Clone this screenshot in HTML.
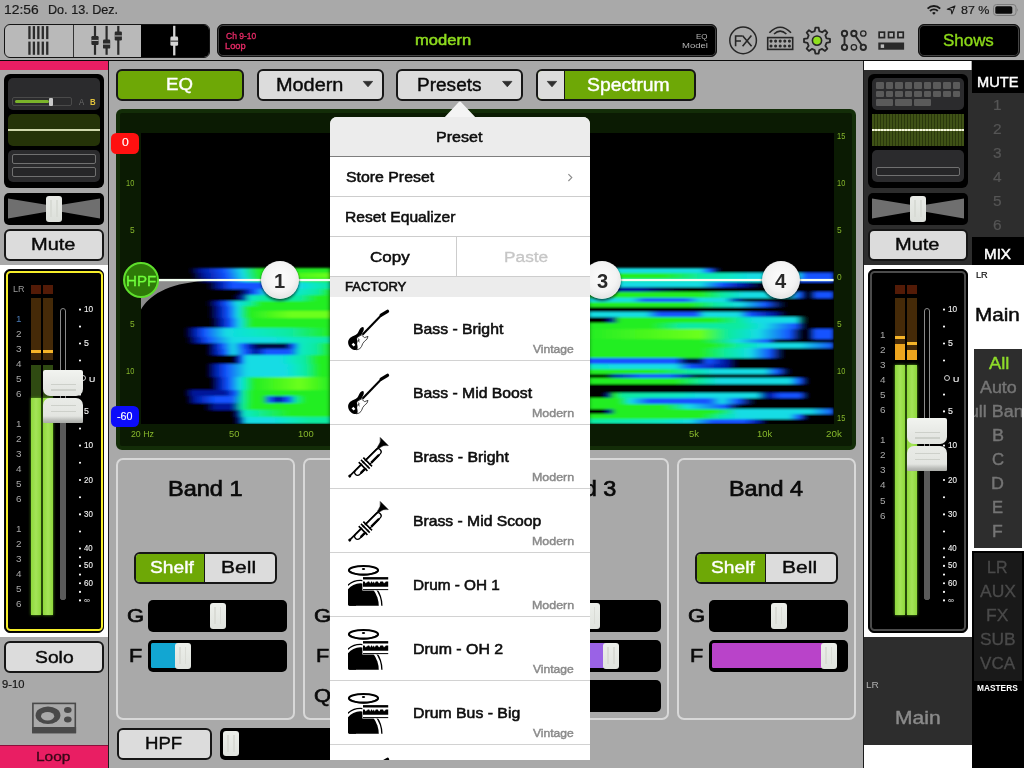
<!DOCTYPE html>
<html><head><meta charset="utf-8"><title>EQ</title>
<style>
html,body{margin:0;padding:0;}
body{width:1024px;height:768px;overflow:hidden;position:relative;background:#a9a9a9;font-family:"Liberation Sans",sans-serif;}
div,span.t,svg{position:absolute;box-sizing:border-box;}
span.t{white-space:nowrap;transform-origin:0 0;display:block;}
</style></head><body>
<span class="t" style="left:3.94px;top:4.29px;font-size:12.06px;line-height:12.06px;color:#1a1a1a;-webkit-text-stroke:0.2px #1a1a1a;transform:scaleX(1.1482);">12:56</span>
<span class="t" style="left:48.46px;top:4.29px;font-size:12.06px;line-height:12.06px;color:#1a1a1a;-webkit-text-stroke:0.2px #1a1a1a;transform:scaleX(1.0468);">Do. 13. Dez.</span>
<span class="t" style="left:960.96px;top:4.35px;font-size:11.63px;line-height:11.63px;color:#1a1a1a;-webkit-text-stroke:0.2px #1a1a1a;transform:scaleX(1.0749);">87 %</span>
<svg style="left:925px;top:3px" width="96" height="14" viewBox="925 3 96 14">
<g fill="none" stroke="#1a1a1a" stroke-width="1.9" stroke-linecap="butt">
<path d="M927.6 8.6 A9 9 0 0 1 940.2 8.6"/>
<path d="M930 11 A5.6 5.6 0 0 1 937.8 11"/>
</g>
<path d="M932.1 12.9 L933.9 14.7 L935.7 12.9 A2.6 2.6 0 0 0 932.1 12.9Z" fill="#1a1a1a"/>
<path d="M955 5.9 L947.3 9.3 L951.2 9.9 L951.9 13.9 Z" fill="none" stroke="#1a1a1a" stroke-width="1.1" stroke-linejoin="round"/>
<rect x="993.5" y="4.5" width="22.5" height="11" rx="3" fill="none" stroke="#7d7d7d" stroke-width="1"/>
<rect x="995.3" y="6.2" width="17" height="7.6" rx="1.6" fill="#0a0a0a"/>
<path d="M1017 8.3 q1.6 1.7 0 3.4z" fill="#7d7d7d"/>
</svg>
<div style="left:4px;top:24px;width:205.5px;height:33.5px;background:#b9b9b9;border:1.3px solid #141414;border-radius:6px;overflow:hidden;"><div style="left:67.7px;top:0;width:1px;height:33px;background:#333"></div><div style="left:136px;top:-1px;width:70px;height:35px;background:#000"></div></div>
<svg style="left:0;top:0" width="1024" height="60" viewBox="0 0 1024 60"><rect x="28.30" y="26.1" width="2.3" height="13" fill="#2b2b2b"/><rect x="28.30" y="41.6" width="2.3" height="13.2" fill="#2b2b2b"/><rect x="32.75" y="26.1" width="2.3" height="13" fill="#2b2b2b"/><rect x="32.75" y="41.6" width="2.3" height="13.2" fill="#2b2b2b"/><rect x="37.20" y="26.1" width="2.3" height="13" fill="#2b2b2b"/><rect x="37.20" y="41.6" width="2.3" height="13.2" fill="#2b2b2b"/><rect x="41.65" y="26.1" width="2.3" height="13" fill="#2b2b2b"/><rect x="41.65" y="41.6" width="2.3" height="13.2" fill="#2b2b2b"/><rect x="46.10" y="26.1" width="2.3" height="13" fill="#2b2b2b"/><rect x="46.10" y="41.6" width="2.3" height="13.2" fill="#2b2b2b"/><rect x="93.90" y="25.9" width="2.2" height="28.9" fill="#2b2b2b"/><rect x="91.40" y="36.00" width="7.2" height="9" rx="1.2" fill="#2b2b2b"/><rect x="91.40" y="39.90" width="7.2" height="1.1" fill="#b0b0b0"/><rect x="105.50" y="25.9" width="2.2" height="28.9" fill="#2b2b2b"/><rect x="103.00" y="39.60" width="7.2" height="9" rx="1.2" fill="#2b2b2b"/><rect x="103.00" y="43.50" width="7.2" height="1.1" fill="#b0b0b0"/><rect x="117.20" y="25.9" width="2.2" height="28.9" fill="#2b2b2b"/><rect x="114.70" y="31.50" width="7.2" height="9" rx="1.2" fill="#2b2b2b"/><rect x="114.70" y="35.40" width="7.2" height="1.1" fill="#b0b0b0"/><rect x="173.1" y="25.8" width="2.3" height="29.6" fill="#d4d4d4"/><rect x="170.4" y="36.6" width="7.7" height="9.2" rx="1.3" fill="#d4d4d4"/><rect x="170.4" y="40.6" width="7.7" height="1.1" fill="#333"/><circle cx="743.1" cy="40.4" r="13.3" fill="none" stroke="#262626" stroke-width="1.5"/><g fill="none" stroke="#262626" stroke-width="1.6"><path d="M735.6 46.2 V36 H742 M735.6 41 H741"/><path d="M742.4 35.4 L751.6 46.2 M751.4 35.4 L742.6 46.2"/></g><rect x="767.7" y="37.6" width="25" height="11.8" fill="none" stroke="#262626" stroke-width="1.6"/><circle cx="771.00" cy="41.10" r="1.55" fill="#2a2a2a"/><circle cx="771.00" cy="46.00" r="1.55" fill="#2a2a2a"/><circle cx="775.60" cy="41.10" r="1.55" fill="#2a2a2a"/><circle cx="775.60" cy="46.00" r="1.55" fill="#2a2a2a"/><circle cx="780.20" cy="41.10" r="1.55" fill="#2a2a2a"/><circle cx="780.20" cy="46.00" r="1.55" fill="#2a2a2a"/><circle cx="784.80" cy="41.10" r="1.55" fill="#2a2a2a"/><circle cx="784.80" cy="46.00" r="1.55" fill="#2a2a2a"/><circle cx="789.40" cy="41.10" r="1.55" fill="#2a2a2a"/><circle cx="789.40" cy="46.00" r="1.55" fill="#2a2a2a"/><g fill="none" stroke="#262626" stroke-width="1.6"><path d="M769.4 32.8 Q780.2 21.7 791 32.8"/><path d="M774 34 Q780.2 28.2 786.4 34"/></g><path d="M814.72 31.07 L815.37 27.60 L818.63 27.60 L819.28 31.07 L822.13 32.25 L825.04 30.25 L827.35 32.56 L825.35 35.47 L826.53 38.32 L830.00 38.97 L830.00 42.23 L826.53 42.88 L825.35 45.73 L827.35 48.64 L825.04 50.95 L822.13 48.95 L819.28 50.13 L818.63 53.60 L815.37 53.60 L814.72 50.13 L811.87 48.95 L808.96 50.95 L806.65 48.64 L808.65 45.73 L807.47 42.88 L804.00 42.23 L804.00 38.97 L807.47 38.32 L808.65 35.47 L806.65 32.56 L808.96 30.25 L811.87 32.25Z" fill="none" stroke="#262626" stroke-width="1.8" stroke-linejoin="round"/><circle cx="817" cy="40.6" r="4.6" fill="#8fe01c" stroke="#262626" stroke-width="1.6"/><g fill="none" stroke="#262626"><g stroke-width="1.9"><path d="M844.5 36.6 V44.3 M855.6 36 L861.5 44.8"/><circle cx="844.5" cy="33.5" r="2.7"/><circle cx="853.9" cy="33.5" r="2.7"/><circle cx="844.5" cy="47.3" r="2.7"/><circle cx="863.3" cy="47.3" r="2.7"/></g><g stroke-width="1.3"><circle cx="863.3" cy="33.5" r="2.7"/><circle cx="853.9" cy="47.3" r="2.7"/></g></g><rect x="879.15" y="32.2" width="5.3" height="5.4" fill="#b4b4b4" stroke="#262626" stroke-width="1.7"/><rect x="888.55" y="32.2" width="5.3" height="5.4" fill="#b4b4b4" stroke="#262626" stroke-width="1.7"/><rect x="897.95" y="32.2" width="5.3" height="5.4" fill="#b4b4b4" stroke="#262626" stroke-width="1.7"/><rect x="878.3" y="42.5" width="25.8" height="7.2" fill="#2a2a2a"/><rect x="880.7" y="44.4" width="3.4" height="3.5" fill="#bbb"/></svg>
<div style="left:217px;top:24px;width:499.5px;height:33px;background:#000;border:1px solid #111;box-shadow:inset 0 0 0 1px #444;border-radius:6px;"></div>
<span class="t" style="left:225.57px;top:33.31px;font-size:8.14px;line-height:8.14px;color:#e62a66;-webkit-text-stroke:0.3px #e62a66;transform:scaleX(1.0451);">Ch 9-10</span>
<span class="t" style="left:225.24px;top:42.91px;font-size:8.14px;line-height:8.14px;color:#e62a66;-webkit-text-stroke:0.3px #e62a66;transform:scaleX(1.1404);">Loop</span>
<span class="t" style="left:414.90px;top:33.29px;font-size:14.54px;line-height:14.54px;color:#8edb1f;-webkit-text-stroke:0.5px #8edb1f;transform:scaleX(1.1398);">modern</span>
<span class="t" style="left:696.34px;top:32.95px;font-size:7.85px;line-height:7.85px;color:#b4b4b4;transform:scaleX(1.0173);">EQ</span>
<span class="t" style="left:682.22px;top:42.35px;font-size:7.85px;line-height:7.85px;color:#b4b4b4;transform:scaleX(1.2123);">Model</span>
<div style="left:918px;top:24px;width:102px;height:33px;background:#000;border:1px solid #111;box-shadow:inset 0 0 0 1px #444;border-radius:6px;"></div>
<span class="t" style="left:942.98px;top:32.79px;font-size:15.84px;line-height:15.84px;color:#8cd919;-webkit-text-stroke:0.35px #8cd919;transform:scaleX(1.0700);">Shows</span>
<div style="left:0px;top:60px;width:1024px;height:1px;background:#0a0a0a;"></div>
<div style="left:0px;top:61px;width:107.6px;height:9.4px;background:#e91e63;"></div>
<div style="left:108px;top:61px;width:1px;height:707px;background:#1c1c1c;"></div>
<div style="left:4px;top:74px;width:100px;height:114px;background:#000;border-radius:6px;"></div>
<div style="left:8px;top:78px;width:92px;height:32px;background:#2b2b2d;border-radius:5px;"></div>
<div style="left:8px;top:114px;width:92px;height:32px;background:#253308;border-radius:5px;overflow:hidden;"><div style="left:0;top:15.3px;width:92px;height:1.7px;background:#cfd7ab"></div></div>
<div style="left:8px;top:150px;width:92px;height:32px;background:#2b2b2d;border-radius:5px;"></div>
<div style="left:12px;top:154px;width:84px;height:10px;border:1.6px solid #707070;border-radius:2px;background:#262628;"></div>
<div style="left:12px;top:167px;width:84px;height:10px;border:1.6px solid #707070;border-radius:2px;background:#262628;"></div>
<div style="left:12.3px;top:97.2px;width:59.4px;height:8.7px;border:1px solid #4a4a4a;border-radius:2px;"></div>
<div style="left:15px;top:99.6px;width:33.6px;height:3.6px;background:#7ab32a;border-radius:1.8px;"></div>
<div style="left:48.8px;top:97.6px;width:3.8px;height:8px;background:#c9c9c9;border-radius:1px;"></div>
<span class="t" style="left:79.38px;top:98.61px;font-size:8.14px;line-height:8.14px;color:#6a6a6a;transform:scaleX(0.9634);">A</span>
<span class="t" style="left:89.67px;top:98.61px;font-size:8.14px;line-height:8.14px;color:#e2c23c;font-weight:bold;transform:scaleX(0.9669);">B</span>
<div style="left:4px;top:193px;width:100px;height:32px;background:#000;border-radius:5px;"></div>
<svg style="left:4px;top:193px" width="100" height="32" viewBox="0 0 100 32"><path d="M4 5.6 L50 13 L96 5.6 L96 25.6 L50 17.6 L4 25.6Z" fill="#6f6f6f"/></svg>
<div style="left:46px;top:196px;width:16px;height:25.6px;background:linear-gradient(#e9ebe7,#dcdfda);border-radius:3px;"><div style="left:4.4px;top:4px;width:1.6px;height:17px;background:#d8dbd5"></div><div style="left:10px;top:4px;width:1.6px;height:17px;background:#d8dbd5"></div></div>
<div style="left:4px;top:229px;width:100px;height:32px;background:#dcdcdc;border:2px solid #161616;border-radius:6px;"></div>
<span class="t" style="left:31.36px;top:236.39px;font-size:16.42px;line-height:16.42px;color:#0a0a0a;-webkit-text-stroke:0.4px #0a0a0a;transform:scaleX(1.2196);">Mute</span>
<div style="left:0px;top:265px;width:108px;height:372px;background:#fff;"></div>
<div style="left:4px;top:269px;width:100px;height:363.5px;background:#000;border:1.5px solid #0a0a0a;border-radius:6px;"></div>
<div style="left:5.5px;top:270.5px;width:97px;height:360.5px;background:#000;border:2px solid #f6ee2a;border-radius:4.5px;"></div>
<div style="left:31px;top:285px;width:10px;height:9.2px;background:#531b07;"></div>
<div style="left:31px;top:298.4px;width:10px;height:61.8px;background:#452a08;"></div>
<div style="left:31px;top:349.5px;width:10px;height:3.3px;background:#f5b429;"></div>
<div style="left:31px;top:365px;width:10px;height:33px;background:#2f4a12;"></div>
<div style="left:31px;top:398px;width:10px;height:217px;background:linear-gradient(90deg,#8fd83c,#a4e458 50%,#8fd83c);box-shadow:0 0 3px #58a818;"></div>
<div style="left:43px;top:285px;width:10px;height:9.2px;background:#531b07;"></div>
<div style="left:43px;top:298.4px;width:10px;height:61.8px;background:#452a08;"></div>
<div style="left:43px;top:349.5px;width:10px;height:3.3px;background:#f5b429;"></div>
<div style="left:43px;top:365px;width:10px;height:33px;background:#2f4a12;"></div>
<div style="left:43px;top:398px;width:10px;height:217px;background:linear-gradient(90deg,#8fd83c,#a4e458 50%,#8fd83c);box-shadow:0 0 3px #58a818;"></div>
<div style="left:60px;top:308.4px;width:6px;height:291.6px;background:#000;border:1px solid #8a8a8a;border-radius:3px;"></div>
<div style="left:60px;top:410px;width:6px;height:190px;background:#5a5a5a;border-radius:0 0 3px 3px;"></div>
<svg style="left:77.30px;top:300px" width="6" height="310" viewBox="0 300 6 310"><circle cx="3" cy="309.60" r="1.05" fill="#fff"/><circle cx="3" cy="326.60" r="1.05" fill="#fff"/><circle cx="3" cy="343.50" r="1.05" fill="#fff"/><circle cx="3" cy="360.50" r="1.05" fill="#fff"/><circle cx="3" cy="394.60" r="1.05" fill="#fff"/><circle cx="3" cy="411.40" r="1.05" fill="#fff"/><circle cx="3" cy="428.60" r="1.05" fill="#fff"/><circle cx="3" cy="445.60" r="1.05" fill="#fff"/><circle cx="3" cy="462.80" r="1.05" fill="#fff"/><circle cx="3" cy="480.00" r="1.05" fill="#fff"/><circle cx="3" cy="497.20" r="1.05" fill="#fff"/><circle cx="3" cy="514.40" r="1.05" fill="#fff"/><circle cx="3" cy="531.50" r="1.05" fill="#fff"/><circle cx="3" cy="548.50" r="1.05" fill="#fff"/><circle cx="3" cy="557.20" r="1.05" fill="#fff"/><circle cx="3" cy="565.90" r="1.05" fill="#fff"/><circle cx="3" cy="574.60" r="1.05" fill="#fff"/><circle cx="3" cy="583.20" r="1.05" fill="#fff"/><circle cx="3" cy="591.90" r="1.05" fill="#fff"/><circle cx="3" cy="600.40" r="1.05" fill="#fff"/></svg>
<span class="t" style="left:83.57px;top:305.14px;font-size:8.58px;line-height:8.58px;color:#f2f2f2;-webkit-text-stroke:0.1px #f2f2f2;transform:scaleX(0.9590);">10</span>
<span class="t" style="left:83.85px;top:339.04px;font-size:8.58px;line-height:8.58px;color:#f2f2f2;-webkit-text-stroke:0.1px #f2f2f2;transform:scaleX(1.0329);">5</span>
<span class="t" style="left:83.85px;top:406.94px;font-size:8.58px;line-height:8.58px;color:#f2f2f2;-webkit-text-stroke:0.1px #f2f2f2;transform:scaleX(1.0329);">5</span>
<span class="t" style="left:83.57px;top:441.14px;font-size:8.58px;line-height:8.58px;color:#f2f2f2;-webkit-text-stroke:0.1px #f2f2f2;transform:scaleX(0.9590);">10</span>
<span class="t" style="left:83.80px;top:475.54px;font-size:8.58px;line-height:8.58px;color:#f2f2f2;-webkit-text-stroke:0.1px #f2f2f2;transform:scaleX(0.9347);">20</span>
<span class="t" style="left:83.90px;top:509.94px;font-size:8.58px;line-height:8.58px;color:#f2f2f2;-webkit-text-stroke:0.1px #f2f2f2;transform:scaleX(0.9237);">30</span>
<span class="t" style="left:84.02px;top:544.04px;font-size:8.58px;line-height:8.58px;color:#f2f2f2;-webkit-text-stroke:0.1px #f2f2f2;transform:scaleX(0.9104);">40</span>
<span class="t" style="left:83.88px;top:561.44px;font-size:8.58px;line-height:8.58px;color:#f2f2f2;-webkit-text-stroke:0.1px #f2f2f2;transform:scaleX(0.9254);">50</span>
<span class="t" style="left:83.79px;top:578.74px;font-size:8.58px;line-height:8.58px;color:#f2f2f2;-webkit-text-stroke:0.1px #f2f2f2;transform:scaleX(0.9351);">60</span>
<span class="t" style="left:83.65px;top:596.71px;font-size:8.14px;line-height:8.14px;color:#e8e8e8;transform:scaleX(1.0174);">∞</span>
<div style="left:80.30px;top:374.6px;width:6px;height:6.4px;border:1px solid #cfcfcf;border-radius:4px"></div>
<span class="t" style="left:88.72px;top:376.38px;font-size:7.70px;line-height:7.70px;color:#e8e8e8;-webkit-text-stroke:0.2px #e8e8e8;transform:scaleX(1.1429);">U</span>
<span class="t" style="left:15.92px;top:313.63px;font-size:9.88px;line-height:9.88px;color:#4a7ab5;transform:scaleX(1.0030);">1</span>
<span class="t" style="left:16.05px;top:328.73px;font-size:9.88px;line-height:9.88px;color:#a8a8a8;transform:scaleX(1.0030);">2</span>
<span class="t" style="left:16.08px;top:343.83px;font-size:9.88px;line-height:9.88px;color:#a8a8a8;transform:scaleX(1.0030);">3</span>
<span class="t" style="left:16.08px;top:358.93px;font-size:9.88px;line-height:9.88px;color:#a8a8a8;transform:scaleX(1.0030);">4</span>
<span class="t" style="left:16.06px;top:374.03px;font-size:9.88px;line-height:9.88px;color:#a8a8a8;transform:scaleX(1.0030);">5</span>
<span class="t" style="left:16.02px;top:389.13px;font-size:9.88px;line-height:9.88px;color:#a8a8a8;transform:scaleX(1.0030);">6</span>
<span class="t" style="left:15.92px;top:418.63px;font-size:9.88px;line-height:9.88px;color:#a8a8a8;transform:scaleX(1.0030);">1</span>
<span class="t" style="left:16.05px;top:433.73px;font-size:9.88px;line-height:9.88px;color:#a8a8a8;transform:scaleX(1.0030);">2</span>
<span class="t" style="left:16.08px;top:448.83px;font-size:9.88px;line-height:9.88px;color:#a8a8a8;transform:scaleX(1.0030);">3</span>
<span class="t" style="left:16.08px;top:463.93px;font-size:9.88px;line-height:9.88px;color:#a8a8a8;transform:scaleX(1.0030);">4</span>
<span class="t" style="left:16.06px;top:479.03px;font-size:9.88px;line-height:9.88px;color:#a8a8a8;transform:scaleX(1.0030);">5</span>
<span class="t" style="left:16.02px;top:494.13px;font-size:9.88px;line-height:9.88px;color:#a8a8a8;transform:scaleX(1.0030);">6</span>
<span class="t" style="left:15.92px;top:523.63px;font-size:9.88px;line-height:9.88px;color:#a8a8a8;transform:scaleX(1.0030);">1</span>
<span class="t" style="left:16.05px;top:538.73px;font-size:9.88px;line-height:9.88px;color:#a8a8a8;transform:scaleX(1.0030);">2</span>
<span class="t" style="left:16.08px;top:553.83px;font-size:9.88px;line-height:9.88px;color:#a8a8a8;transform:scaleX(1.0030);">3</span>
<span class="t" style="left:16.08px;top:568.93px;font-size:9.88px;line-height:9.88px;color:#a8a8a8;transform:scaleX(1.0030);">4</span>
<span class="t" style="left:16.06px;top:584.03px;font-size:9.88px;line-height:9.88px;color:#a8a8a8;transform:scaleX(1.0030);">5</span>
<span class="t" style="left:16.02px;top:599.13px;font-size:9.88px;line-height:9.88px;color:#a8a8a8;transform:scaleX(1.0030);">6</span>
<span class="t" style="left:13.06px;top:285.17px;font-size:9.01px;line-height:9.01px;color:#9a9a9a;transform:scaleX(1.0036);">LR</span>
<div style="left:43px;top:370px;width:40px;height:25.6px;background:linear-gradient(#f2f4f0,#e6e8e4 60%,#e2e4e0);border-radius:2px 2px 7px 7px;"></div>
<div style="left:43px;top:397.6px;width:40px;height:25.6px;background:linear-gradient(#e9ebe7,#e3e5e1 72%,#b9bbb7 90%,#a9aba7);border-radius:7px 7px 1px 1px;"></div>
<div style="left:50.6px;top:383.6px;width:25px;height:1.4px;background:#cdd0ca;"></div>
<div style="left:50.6px;top:389.3px;width:25px;height:1.4px;background:#cdd0ca;"></div>
<div style="left:50.6px;top:405.1px;width:25px;height:1.4px;background:#cdd0ca;"></div>
<div style="left:50.6px;top:410.7px;width:25px;height:1.4px;background:#cdd0ca;"></div>
<div style="left:4px;top:641px;width:100px;height:32px;background:#dcdcdc;border:2px solid #161616;border-radius:6px;"></div>
<span class="t" style="left:34.62px;top:648.59px;font-size:16.42px;line-height:16.42px;color:#0a0a0a;-webkit-text-stroke:0.4px #0a0a0a;transform:scaleX(1.1769);">Solo</span>
<span class="t" style="left:2.08px;top:679.49px;font-size:10.76px;line-height:10.76px;color:#161616;-webkit-text-stroke:0.2px #161616;transform:scaleX(1.0386);">9-10</span>
<svg style="left:30px;top:700px" width="50" height="36" viewBox="30 700 50 36">
<rect x="32.9" y="703.4" width="42.4" height="29" fill="none" stroke="#494949" stroke-width="1.6"/>
<rect x="32.1" y="727" width="44" height="6.3" fill="#494949"/>
<ellipse cx="48" cy="715.2" rx="12.4" ry="8.8" fill="#494949"/>
<ellipse cx="47.6" cy="716.3" rx="6.6" ry="4.2" fill="#a9a9a9"/>
<ellipse cx="67.8" cy="709.9" rx="3.8" ry="3" fill="#494949"/>
<ellipse cx="67.8" cy="719.6" rx="3.8" ry="3" fill="#494949"/>
</svg>
<div style="left:0px;top:745px;width:107.6px;height:23px;background:#e91e63;border-top:1px solid #8c0f3a;"></div>
<span class="t" style="left:36.28px;top:750.18px;font-size:13.37px;line-height:13.37px;color:#3b0718;-webkit-text-stroke:0.35px #3b0718;transform:scaleX(1.1570);">Loop</span>
<div style="left:116px;top:69px;width:127.5px;height:32px;background:#6ea806;border:2px solid #161616;border-radius:6px;"></div>
<span class="t" style="left:166.02px;top:76.46px;font-size:17.30px;line-height:17.30px;color:#fff;-webkit-text-stroke:0.4px #fff;transform:scaleX(1.0772);">EQ</span>
<div style="left:257px;top:69px;width:126.6px;height:32px;background:#dcdcdc;border:2px solid #161616;border-radius:6px;"></div>
<span class="t" style="left:276.37px;top:75.54px;font-size:18.02px;line-height:18.02px;color:#0a0a0a;-webkit-text-stroke:0.4px #0a0a0a;transform:scaleX(1.1032);">Modern</span>
<div style="left:396.4px;top:69px;width:127px;height:32px;background:#dcdcdc;border:2px solid #161616;border-radius:6px;"></div>
<span class="t" style="left:417.24px;top:75.54px;font-size:18.02px;line-height:18.02px;color:#0a0a0a;-webkit-text-stroke:0.4px #0a0a0a;transform:scaleX(1.0564);">Presets</span>
<div style="left:536.4px;top:69px;width:159.6px;height:32px;background:#6ea806;border:2px solid #161616;border-radius:6px; overflow:hidden;"><div style="left:-2px;top:-2px;width:29px;height:32px;background:#dcdcdc;border-right:1.5px solid #161616"></div></div>
<span class="t" style="left:586.72px;top:75.54px;font-size:18.02px;line-height:18.02px;color:#fff;-webkit-text-stroke:0.4px #fff;transform:scaleX(1.0729);">Spectrum</span>
<svg style="left:0;top:78px" width="700" height="12" viewBox="0 78 700 12"><g fill="#2e2e2e" stroke="#2e2e2e" stroke-width="0.8" stroke-linejoin="round"><path d="M363.3 81.4 H372.6 L368 86.8Z"/><path d="M502.6 81.4 H511.9 L507.3 86.8Z"/><path d="M547.3 81.4 H556.6 L552 86.8Z"/></g></svg>
<div style="left:116px;top:109px;width:740px;height:340.6px;background:#0b1b03;border:4px solid #132d08;border-radius:6px;"></div>
<div style="left:141px;top:133.4px;width:692.6px;height:290.5px;background:#000;"></div>
<svg style="left:141px;top:133px" width="693" height="291" viewBox="141 133 693 291"><defs><filter id="bl" x="-5%" y="-5%" width="110%" height="110%"><feGaussianBlur stdDeviation="2.4 1.0"/></filter><clipPath id="cp"><rect x="141" y="133.4" width="692.6" height="290.5"/></clipPath><linearGradient id="g1" gradientUnits="userSpaceOnUse" x1="141" y1="0" x2="331" y2="0"><stop offset="0.0000" stop-color="#000000"/><stop offset="0.2579" stop-color="#000000"/><stop offset="0.3105" stop-color="#00169a"/><stop offset="0.4368" stop-color="#1253ff"/><stop offset="0.5316" stop-color="#12dce4"/><stop offset="0.6211" stop-color="#24ee22"/><stop offset="1.0000" stop-color="#24ee22"/></linearGradient><linearGradient id="g2" gradientUnits="userSpaceOnUse" x1="141" y1="0" x2="331" y2="0"><stop offset="0.0000" stop-color="#000000"/><stop offset="0.2684" stop-color="#000000"/><stop offset="0.3263" stop-color="#00169a"/><stop offset="0.4474" stop-color="#1253ff"/><stop offset="0.5368" stop-color="#12dce4"/><stop offset="0.6263" stop-color="#24ee22"/><stop offset="1.0000" stop-color="#6cff1c"/></linearGradient><linearGradient id="g3" gradientUnits="userSpaceOnUse" x1="141" y1="0" x2="331" y2="0"><stop offset="0.0000" stop-color="#000000"/><stop offset="0.2895" stop-color="#000000"/><stop offset="0.3632" stop-color="#00169a"/><stop offset="0.4684" stop-color="#1253ff"/><stop offset="0.5526" stop-color="#12dce4"/><stop offset="0.6368" stop-color="#24ee22"/><stop offset="1.0000" stop-color="#24ee22"/></linearGradient><linearGradient id="g4" gradientUnits="userSpaceOnUse" x1="141" y1="0" x2="331" y2="0"><stop offset="0.0000" stop-color="#000000"/><stop offset="0.3526" stop-color="#000000"/><stop offset="0.4053" stop-color="#00169a"/><stop offset="0.4789" stop-color="#1253ff"/><stop offset="0.6368" stop-color="#1253ff"/><stop offset="0.7579" stop-color="#12dce4"/><stop offset="0.8368" stop-color="#12dce4"/><stop offset="0.9105" stop-color="#10e8c4"/><stop offset="1.0000" stop-color="#10eaa0"/></linearGradient><linearGradient id="g5" gradientUnits="userSpaceOnUse" x1="141" y1="0" x2="331" y2="0"><stop offset="0.0000" stop-color="#000000"/><stop offset="0.5105" stop-color="#000000"/><stop offset="0.5526" stop-color="#00169a"/><stop offset="0.5947" stop-color="#1253ff"/><stop offset="0.6579" stop-color="#12dce4"/><stop offset="0.8368" stop-color="#10e8c4"/><stop offset="0.9316" stop-color="#10eaa0"/><stop offset="1.0000" stop-color="#24ee22"/></linearGradient><linearGradient id="g6" gradientUnits="userSpaceOnUse" x1="141" y1="0" x2="331" y2="0"><stop offset="0.0000" stop-color="#000000"/><stop offset="0.4895" stop-color="#000000"/><stop offset="0.5316" stop-color="#00169a"/><stop offset="0.5737" stop-color="#10e8c4"/><stop offset="0.6368" stop-color="#10eaa0"/><stop offset="0.8368" stop-color="#10eaa0"/><stop offset="0.9316" stop-color="#24ee22"/><stop offset="1.0000" stop-color="#24ee22"/></linearGradient><linearGradient id="g7" gradientUnits="userSpaceOnUse" x1="141" y1="0" x2="331" y2="0"><stop offset="0.0000" stop-color="#000000"/><stop offset="0.3526" stop-color="#000000"/><stop offset="0.3947" stop-color="#00169a"/><stop offset="0.4474" stop-color="#1253ff"/><stop offset="0.5053" stop-color="#12dce4"/><stop offset="0.5737" stop-color="#10eaa0"/><stop offset="0.6368" stop-color="#24ee22"/><stop offset="1.0000" stop-color="#24ee22"/></linearGradient><linearGradient id="g8" gradientUnits="userSpaceOnUse" x1="141" y1="0" x2="331" y2="0"><stop offset="0.0000" stop-color="#000000"/><stop offset="0.3632" stop-color="#000000"/><stop offset="0.4053" stop-color="#00169a"/><stop offset="0.4579" stop-color="#1253ff"/><stop offset="0.5105" stop-color="#12dce4"/><stop offset="0.5684" stop-color="#24ee22"/><stop offset="1.0000" stop-color="#24ee22"/></linearGradient><linearGradient id="g9" gradientUnits="userSpaceOnUse" x1="141" y1="0" x2="331" y2="0"><stop offset="0.0000" stop-color="#000000"/><stop offset="0.3632" stop-color="#000000"/><stop offset="0.4053" stop-color="#00169a"/><stop offset="0.4579" stop-color="#1253ff"/><stop offset="0.5105" stop-color="#12dce4"/><stop offset="0.5684" stop-color="#24ee22"/><stop offset="0.7842" stop-color="#6cff1c"/><stop offset="1.0000" stop-color="#6cff1c"/></linearGradient><linearGradient id="g10" gradientUnits="userSpaceOnUse" x1="141" y1="0" x2="331" y2="0"><stop offset="0.0000" stop-color="#000000"/><stop offset="0.3737" stop-color="#000000"/><stop offset="0.4158" stop-color="#00169a"/><stop offset="0.4684" stop-color="#1253ff"/><stop offset="0.5211" stop-color="#12dce4"/><stop offset="0.5842" stop-color="#24ee22"/><stop offset="1.0000" stop-color="#24ee22"/></linearGradient><linearGradient id="g11" gradientUnits="userSpaceOnUse" x1="141" y1="0" x2="331" y2="0"><stop offset="0.0000" stop-color="#000000"/><stop offset="0.2368" stop-color="#000000"/><stop offset="0.2737" stop-color="#00169a"/><stop offset="0.3316" stop-color="#1253ff"/><stop offset="0.4474" stop-color="#12dce4"/><stop offset="0.6053" stop-color="#10e8c4"/><stop offset="0.7842" stop-color="#10eaa0"/><stop offset="1.0000" stop-color="#24ee22"/></linearGradient><linearGradient id="g12" gradientUnits="userSpaceOnUse" x1="141" y1="0" x2="331" y2="0"><stop offset="0.0000" stop-color="#000000"/><stop offset="0.2474" stop-color="#000000"/><stop offset="0.2895" stop-color="#00169a"/><stop offset="0.3526" stop-color="#1253ff"/><stop offset="0.4789" stop-color="#12dce4"/><stop offset="0.6789" stop-color="#12dce4"/><stop offset="0.8158" stop-color="#10e8c4"/><stop offset="1.0000" stop-color="#10eaa0"/></linearGradient><linearGradient id="g13" gradientUnits="userSpaceOnUse" x1="141" y1="0" x2="331" y2="0"><stop offset="0.0000" stop-color="#000000"/><stop offset="0.3526" stop-color="#000000"/><stop offset="0.3842" stop-color="#00169a"/><stop offset="0.4263" stop-color="#1253ff"/><stop offset="0.4842" stop-color="#12dce4"/><stop offset="0.5421" stop-color="#1253ff"/><stop offset="0.5842" stop-color="#00169a"/><stop offset="0.6158" stop-color="#000a40"/><stop offset="0.7579" stop-color="#000a40"/><stop offset="0.8000" stop-color="#1253ff"/><stop offset="0.8368" stop-color="#10e8c4"/><stop offset="0.9211" stop-color="#10eaa0"/><stop offset="1.0000" stop-color="#24ee22"/></linearGradient><linearGradient id="g14" gradientUnits="userSpaceOnUse" x1="141" y1="0" x2="331" y2="0"><stop offset="0.0000" stop-color="#000000"/><stop offset="0.3526" stop-color="#000000"/><stop offset="0.3842" stop-color="#00169a"/><stop offset="0.4368" stop-color="#1253ff"/><stop offset="0.4842" stop-color="#12dce4"/><stop offset="0.5526" stop-color="#1253ff"/><stop offset="0.6053" stop-color="#00169a"/><stop offset="0.6579" stop-color="#1253ff"/><stop offset="0.7842" stop-color="#1253ff"/><stop offset="0.8368" stop-color="#10e8c4"/><stop offset="0.9211" stop-color="#10eaa0"/><stop offset="1.0000" stop-color="#24ee22"/></linearGradient><linearGradient id="g15" gradientUnits="userSpaceOnUse" x1="141" y1="0" x2="331" y2="0"><stop offset="0.0000" stop-color="#000000"/><stop offset="0.4895" stop-color="#000000"/><stop offset="0.5105" stop-color="#00169a"/><stop offset="0.5263" stop-color="#1253ff"/><stop offset="0.5526" stop-color="#12dce4"/><stop offset="0.7316" stop-color="#12dce4"/><stop offset="0.7947" stop-color="#10e8c4"/><stop offset="0.8632" stop-color="#10eaa0"/><stop offset="0.9316" stop-color="#24ee22"/><stop offset="1.0000" stop-color="#24ee22"/></linearGradient><linearGradient id="g16" gradientUnits="userSpaceOnUse" x1="141" y1="0" x2="331" y2="0"><stop offset="0.0000" stop-color="#000000"/><stop offset="0.3526" stop-color="#000000"/><stop offset="0.3842" stop-color="#00169a"/><stop offset="0.4474" stop-color="#1253ff"/><stop offset="0.5579" stop-color="#12dce4"/><stop offset="0.7579" stop-color="#12dce4"/><stop offset="0.8158" stop-color="#10e8c4"/><stop offset="0.8684" stop-color="#10eaa0"/><stop offset="0.9421" stop-color="#24ee22"/><stop offset="1.0000" stop-color="#24ee22"/></linearGradient><linearGradient id="g17" gradientUnits="userSpaceOnUse" x1="141" y1="0" x2="331" y2="0"><stop offset="0.0000" stop-color="#000000"/><stop offset="0.3737" stop-color="#000000"/><stop offset="0.4053" stop-color="#00169a"/><stop offset="0.4579" stop-color="#1253ff"/><stop offset="0.5211" stop-color="#12dce4"/><stop offset="0.5526" stop-color="#10eaa0"/><stop offset="0.5947" stop-color="#24ee22"/><stop offset="0.8368" stop-color="#6cff1c"/><stop offset="1.0000" stop-color="#24ee22"/></linearGradient><linearGradient id="g18" gradientUnits="userSpaceOnUse" x1="141" y1="0" x2="331" y2="0"><stop offset="0.0000" stop-color="#000000"/><stop offset="0.2368" stop-color="#000000"/><stop offset="0.2684" stop-color="#00169a"/><stop offset="0.4421" stop-color="#00169a"/><stop offset="0.4947" stop-color="#1253ff"/><stop offset="0.5368" stop-color="#10eaa0"/><stop offset="0.5842" stop-color="#24ee22"/><stop offset="1.0000" stop-color="#24ee22"/></linearGradient><linearGradient id="g19" gradientUnits="userSpaceOnUse" x1="141" y1="0" x2="331" y2="0"><stop offset="0.0000" stop-color="#000000"/><stop offset="0.2474" stop-color="#000000"/><stop offset="0.2789" stop-color="#00169a"/><stop offset="0.3895" stop-color="#1253ff"/><stop offset="0.4789" stop-color="#1253ff"/><stop offset="0.5368" stop-color="#10eaa0"/><stop offset="0.5842" stop-color="#24ee22"/><stop offset="0.6368" stop-color="#24ee22"/><stop offset="0.6789" stop-color="#1253ff"/><stop offset="0.7211" stop-color="#00169a"/><stop offset="0.7737" stop-color="#1253ff"/><stop offset="0.8158" stop-color="#10eaa0"/><stop offset="0.8684" stop-color="#24ee22"/><stop offset="1.0000" stop-color="#24ee22"/></linearGradient><linearGradient id="g20" gradientUnits="userSpaceOnUse" x1="141" y1="0" x2="331" y2="0"><stop offset="0.0000" stop-color="#000000"/><stop offset="0.3368" stop-color="#000000"/><stop offset="0.3895" stop-color="#00169a"/><stop offset="0.4789" stop-color="#00169a"/><stop offset="0.5316" stop-color="#10eaa0"/><stop offset="0.5842" stop-color="#24ee22"/><stop offset="1.0000" stop-color="#24ee22"/></linearGradient><linearGradient id="g21" gradientUnits="userSpaceOnUse" x1="141" y1="0" x2="331" y2="0"><stop offset="0.0000" stop-color="#000000"/><stop offset="0.4895" stop-color="#000000"/><stop offset="0.5105" stop-color="#00169a"/><stop offset="0.5421" stop-color="#10e8c4"/><stop offset="0.6053" stop-color="#10eaa0"/><stop offset="0.7842" stop-color="#24ee22"/><stop offset="1.0000" stop-color="#24ee22"/></linearGradient><linearGradient id="g22" gradientUnits="userSpaceOnUse" x1="141" y1="0" x2="331" y2="0"><stop offset="0.0000" stop-color="#000000"/><stop offset="0.5000" stop-color="#000000"/><stop offset="0.5211" stop-color="#00169a"/><stop offset="0.5526" stop-color="#12dce4"/><stop offset="0.6789" stop-color="#12dce4"/><stop offset="0.7842" stop-color="#10e8c4"/><stop offset="0.8895" stop-color="#10eaa0"/><stop offset="1.0000" stop-color="#10eaa0"/></linearGradient><linearGradient id="g23" gradientUnits="userSpaceOnUse" x1="588" y1="0" x2="834" y2="0"><stop offset="0.0000" stop-color="#10e8c4"/><stop offset="0.1423" stop-color="#12dce4"/><stop offset="0.4553" stop-color="#12dce4"/><stop offset="0.4959" stop-color="#1253ff"/><stop offset="0.5366" stop-color="#000000"/><stop offset="1.0000" stop-color="#000000"/></linearGradient><linearGradient id="g24" gradientUnits="userSpaceOnUse" x1="588" y1="0" x2="834" y2="0"><stop offset="0.0000" stop-color="#24ee22"/><stop offset="0.3008" stop-color="#24ee22"/><stop offset="0.4553" stop-color="#10eaa0"/><stop offset="0.5772" stop-color="#10e8c4"/><stop offset="0.6667" stop-color="#12dce4"/><stop offset="0.8537" stop-color="#12dce4"/><stop offset="0.8862" stop-color="#1253ff"/><stop offset="1.0000" stop-color="#1253ff"/></linearGradient><linearGradient id="g25" gradientUnits="userSpaceOnUse" x1="588" y1="0" x2="834" y2="0"><stop offset="0.0000" stop-color="#10eaa0"/><stop offset="0.4553" stop-color="#10e8c4"/><stop offset="0.6992" stop-color="#12dce4"/><stop offset="0.8618" stop-color="#1253ff"/><stop offset="1.0000" stop-color="#1253ff"/></linearGradient><linearGradient id="g26" gradientUnits="userSpaceOnUse" x1="588" y1="0" x2="834" y2="0"><stop offset="0.0000" stop-color="#12dce4"/><stop offset="0.4553" stop-color="#12dce4"/><stop offset="0.5447" stop-color="#1253ff"/><stop offset="0.6382" stop-color="#00169a"/><stop offset="0.7154" stop-color="#000000"/><stop offset="1.0000" stop-color="#000000"/></linearGradient><linearGradient id="g27" gradientUnits="userSpaceOnUse" x1="588" y1="0" x2="834" y2="0"><stop offset="0.0000" stop-color="#000000"/><stop offset="0.1301" stop-color="#00169a"/><stop offset="0.2114" stop-color="#00169a"/><stop offset="0.3130" stop-color="#000a40"/><stop offset="0.4146" stop-color="#000000"/><stop offset="1.0000" stop-color="#000000"/></linearGradient><linearGradient id="g28" gradientUnits="userSpaceOnUse" x1="588" y1="0" x2="834" y2="0"><stop offset="0.0000" stop-color="#24ee22"/><stop offset="0.4553" stop-color="#24ee22"/><stop offset="0.5447" stop-color="#10eaa0"/><stop offset="0.6382" stop-color="#12dce4"/><stop offset="0.8211" stop-color="#12dce4"/><stop offset="0.8618" stop-color="#1253ff"/><stop offset="0.8902" stop-color="#000000"/><stop offset="0.9024" stop-color="#000000"/><stop offset="0.9268" stop-color="#1253ff"/><stop offset="1.0000" stop-color="#1253ff"/></linearGradient><linearGradient id="g29" gradientUnits="userSpaceOnUse" x1="588" y1="0" x2="834" y2="0"><stop offset="0.0000" stop-color="#12dce4"/><stop offset="0.1789" stop-color="#12dce4"/><stop offset="0.2317" stop-color="#1253ff"/><stop offset="0.3943" stop-color="#1253ff"/><stop offset="0.4553" stop-color="#12dce4"/><stop offset="0.5569" stop-color="#12dce4"/><stop offset="0.6098" stop-color="#00169a"/><stop offset="0.6585" stop-color="#000000"/><stop offset="1.0000" stop-color="#000000"/></linearGradient><linearGradient id="g30" gradientUnits="userSpaceOnUse" x1="588" y1="0" x2="834" y2="0"><stop offset="0.0000" stop-color="#24ee22"/><stop offset="0.4146" stop-color="#24ee22"/><stop offset="0.5163" stop-color="#10eaa0"/><stop offset="0.6179" stop-color="#12dce4"/><stop offset="0.7236" stop-color="#1253ff"/><stop offset="0.8049" stop-color="#000000"/><stop offset="1.0000" stop-color="#000000"/></linearGradient><linearGradient id="g31" gradientUnits="userSpaceOnUse" x1="588" y1="0" x2="834" y2="0"><stop offset="0.0000" stop-color="#000000"/><stop offset="1.0000" stop-color="#000000"/></linearGradient><linearGradient id="g32" gradientUnits="userSpaceOnUse" x1="588" y1="0" x2="834" y2="0"><stop offset="0.0000" stop-color="#12dce4"/><stop offset="0.2317" stop-color="#12dce4"/><stop offset="0.2927" stop-color="#1253ff"/><stop offset="0.4350" stop-color="#1253ff"/><stop offset="0.4756" stop-color="#12dce4"/><stop offset="0.6098" stop-color="#12dce4"/><stop offset="0.6585" stop-color="#1253ff"/><stop offset="0.7602" stop-color="#00169a"/><stop offset="0.8130" stop-color="#000000"/><stop offset="1.0000" stop-color="#000000"/></linearGradient><linearGradient id="g33" gradientUnits="userSpaceOnUse" x1="588" y1="0" x2="834" y2="0"><stop offset="0.0000" stop-color="#000000"/><stop offset="0.0650" stop-color="#000000"/><stop offset="0.0935" stop-color="#00169a"/><stop offset="0.1301" stop-color="#24ee22"/><stop offset="0.5041" stop-color="#24ee22"/><stop offset="0.6098" stop-color="#10eaa0"/><stop offset="0.6829" stop-color="#12dce4"/><stop offset="0.8455" stop-color="#12dce4"/><stop offset="0.8862" stop-color="#000000"/><stop offset="1.0000" stop-color="#000000"/></linearGradient><linearGradient id="g34" gradientUnits="userSpaceOnUse" x1="588" y1="0" x2="834" y2="0"><stop offset="0.0000" stop-color="#24ee22"/><stop offset="0.2520" stop-color="#24ee22"/><stop offset="0.3740" stop-color="#10eaa0"/><stop offset="0.6179" stop-color="#10eaa0"/><stop offset="0.7154" stop-color="#12dce4"/><stop offset="0.8455" stop-color="#1253ff"/><stop offset="0.8862" stop-color="#000000"/><stop offset="1.0000" stop-color="#000000"/></linearGradient><linearGradient id="g35" gradientUnits="userSpaceOnUse" x1="588" y1="0" x2="834" y2="0"><stop offset="0.0000" stop-color="#24ee22"/><stop offset="0.4553" stop-color="#6cff1c"/><stop offset="0.5691" stop-color="#10eaa0"/><stop offset="0.6911" stop-color="#12dce4"/><stop offset="0.8211" stop-color="#1253ff"/><stop offset="0.8740" stop-color="#000000"/><stop offset="0.8943" stop-color="#000000"/><stop offset="0.9228" stop-color="#1253ff"/><stop offset="1.0000" stop-color="#1253ff"/></linearGradient><linearGradient id="g36" gradientUnits="userSpaceOnUse" x1="588" y1="0" x2="834" y2="0"><stop offset="0.0000" stop-color="#24ee22"/><stop offset="0.4553" stop-color="#24ee22"/><stop offset="0.6098" stop-color="#12dce4"/><stop offset="0.7317" stop-color="#1253ff"/><stop offset="0.7764" stop-color="#000000"/><stop offset="1.0000" stop-color="#000000"/></linearGradient><linearGradient id="g37" gradientUnits="userSpaceOnUse" x1="588" y1="0" x2="834" y2="0"><stop offset="0.0000" stop-color="#24ee22"/><stop offset="0.5041" stop-color="#24ee22"/><stop offset="0.6098" stop-color="#10eaa0"/><stop offset="0.7154" stop-color="#12dce4"/><stop offset="0.8618" stop-color="#12dce4"/><stop offset="1.0000" stop-color="#1253ff"/></linearGradient><linearGradient id="g38" gradientUnits="userSpaceOnUse" x1="588" y1="0" x2="834" y2="0"><stop offset="0.0000" stop-color="#24ee22"/><stop offset="0.4553" stop-color="#24ee22"/><stop offset="0.5610" stop-color="#10eaa0"/><stop offset="0.6585" stop-color="#12dce4"/><stop offset="0.7398" stop-color="#1253ff"/><stop offset="0.7967" stop-color="#000000"/><stop offset="1.0000" stop-color="#000000"/></linearGradient><linearGradient id="g39" gradientUnits="userSpaceOnUse" x1="588" y1="0" x2="834" y2="0"><stop offset="0.0000" stop-color="#1253ff"/><stop offset="0.3537" stop-color="#1253ff"/><stop offset="0.4065" stop-color="#000a40"/><stop offset="0.4472" stop-color="#000a40"/><stop offset="0.4878" stop-color="#1253ff"/><stop offset="0.5650" stop-color="#00169a"/><stop offset="0.6098" stop-color="#000000"/><stop offset="1.0000" stop-color="#000000"/></linearGradient><linearGradient id="g40" gradientUnits="userSpaceOnUse" x1="588" y1="0" x2="834" y2="0"><stop offset="0.0000" stop-color="#10e8c4"/><stop offset="0.1098" stop-color="#12dce4"/><stop offset="0.3537" stop-color="#12dce4"/><stop offset="0.4146" stop-color="#1253ff"/><stop offset="0.5650" stop-color="#00169a"/><stop offset="0.6098" stop-color="#000000"/><stop offset="1.0000" stop-color="#000000"/></linearGradient><linearGradient id="g41" gradientUnits="userSpaceOnUse" x1="588" y1="0" x2="834" y2="0"><stop offset="0.0000" stop-color="#24ee22"/><stop offset="0.2520" stop-color="#24ee22"/><stop offset="0.4146" stop-color="#10eaa0"/><stop offset="0.5163" stop-color="#12dce4"/><stop offset="0.7154" stop-color="#12dce4"/><stop offset="0.7724" stop-color="#1253ff"/><stop offset="0.8211" stop-color="#000000"/><stop offset="1.0000" stop-color="#000000"/></linearGradient><linearGradient id="g42" gradientUnits="userSpaceOnUse" x1="588" y1="0" x2="834" y2="0"><stop offset="0.0000" stop-color="#000000"/><stop offset="0.0732" stop-color="#000000"/><stop offset="0.1057" stop-color="#00169a"/><stop offset="0.2114" stop-color="#1253ff"/><stop offset="0.3333" stop-color="#1253ff"/><stop offset="0.4065" stop-color="#00169a"/><stop offset="0.4553" stop-color="#000000"/><stop offset="1.0000" stop-color="#000000"/></linearGradient><linearGradient id="g43" gradientUnits="userSpaceOnUse" x1="588" y1="0" x2="834" y2="0"><stop offset="0.0000" stop-color="#24ee22"/><stop offset="0.3537" stop-color="#24ee22"/><stop offset="0.4553" stop-color="#10eaa0"/><stop offset="0.5366" stop-color="#12dce4"/><stop offset="0.8171" stop-color="#12dce4"/><stop offset="0.8618" stop-color="#1253ff"/><stop offset="0.8943" stop-color="#000000"/><stop offset="1.0000" stop-color="#000000"/></linearGradient><linearGradient id="g44" gradientUnits="userSpaceOnUse" x1="588" y1="0" x2="834" y2="0"><stop offset="0.0000" stop-color="#000000"/><stop offset="1.0000" stop-color="#000000"/></linearGradient><linearGradient id="g45" gradientUnits="userSpaceOnUse" x1="588" y1="0" x2="834" y2="0"><stop offset="0.0000" stop-color="#000000"/><stop offset="0.0610" stop-color="#000000"/><stop offset="0.0813" stop-color="#00169a"/><stop offset="0.1057" stop-color="#24ee22"/><stop offset="0.1382" stop-color="#10eaa0"/><stop offset="0.3740" stop-color="#10e8c4"/><stop offset="0.4553" stop-color="#12dce4"/><stop offset="0.6829" stop-color="#12dce4"/><stop offset="0.7317" stop-color="#00169a"/><stop offset="0.7805" stop-color="#1253ff"/><stop offset="0.8618" stop-color="#1253ff"/><stop offset="0.8943" stop-color="#000000"/><stop offset="1.0000" stop-color="#000000"/></linearGradient><linearGradient id="g46" gradientUnits="userSpaceOnUse" x1="588" y1="0" x2="834" y2="0"><stop offset="0.0000" stop-color="#24ee22"/><stop offset="0.1220" stop-color="#24ee22"/><stop offset="0.1707" stop-color="#12dce4"/><stop offset="0.2520" stop-color="#1253ff"/><stop offset="0.4878" stop-color="#1253ff"/><stop offset="0.5447" stop-color="#12dce4"/><stop offset="0.6098" stop-color="#1253ff"/><stop offset="0.6789" stop-color="#000000"/><stop offset="1.0000" stop-color="#000000"/></linearGradient><linearGradient id="g47" gradientUnits="userSpaceOnUse" x1="588" y1="0" x2="834" y2="0"><stop offset="0.0000" stop-color="#24ee22"/><stop offset="0.3008" stop-color="#24ee22"/><stop offset="0.4065" stop-color="#12dce4"/><stop offset="0.5569" stop-color="#1253ff"/><stop offset="0.6260" stop-color="#000000"/><stop offset="1.0000" stop-color="#000000"/></linearGradient><linearGradient id="g48" gradientUnits="userSpaceOnUse" x1="588" y1="0" x2="834" y2="0"><stop offset="0.0000" stop-color="#000000"/><stop offset="0.0650" stop-color="#000000"/><stop offset="0.0854" stop-color="#00169a"/><stop offset="0.1138" stop-color="#24ee22"/><stop offset="0.5081" stop-color="#24ee22"/><stop offset="0.6098" stop-color="#12dce4"/><stop offset="0.9024" stop-color="#12dce4"/><stop offset="1.0000" stop-color="#1253ff"/></linearGradient><linearGradient id="g49" gradientUnits="userSpaceOnUse" x1="588" y1="0" x2="834" y2="0"><stop offset="0.0000" stop-color="#24ee22"/><stop offset="0.4553" stop-color="#24ee22"/><stop offset="0.5366" stop-color="#10eaa0"/><stop offset="0.6179" stop-color="#12dce4"/><stop offset="0.8171" stop-color="#12dce4"/><stop offset="0.8618" stop-color="#1253ff"/><stop offset="0.8943" stop-color="#000000"/><stop offset="1.0000" stop-color="#000000"/></linearGradient><linearGradient id="g50" gradientUnits="userSpaceOnUse" x1="588" y1="0" x2="834" y2="0"><stop offset="0.0000" stop-color="#10eaa0"/><stop offset="0.3008" stop-color="#10e8c4"/><stop offset="0.4146" stop-color="#12dce4"/><stop offset="0.5081" stop-color="#1253ff"/><stop offset="0.6382" stop-color="#1253ff"/><stop offset="0.6992" stop-color="#00169a"/><stop offset="0.7236" stop-color="#000000"/><stop offset="1.0000" stop-color="#000000"/></linearGradient></defs><g clip-path="url(#cp)"><g filter="url(#bl)" shape-rendering="crispEdges"><rect x="141" y="267.8" width="190" height="5.1" fill="url(#g1)"/><rect x="141" y="272.6" width="190" height="5.3" fill="url(#g2)"/><rect x="141" y="277.6" width="190" height="5.1" fill="url(#g3)"/><rect x="141" y="282.4" width="190" height="7.1" fill="url(#g4)"/><rect x="141" y="289.2" width="190" height="6.1" fill="url(#g5)"/><rect x="141" y="295" width="190" height="5.8" fill="url(#g6)"/><rect x="141" y="300.5" width="190" height="5.8" fill="url(#g7)"/><rect x="141" y="306" width="190" height="5.3" fill="url(#g8)"/><rect x="141" y="311" width="190" height="7.3" fill="url(#g9)"/><rect x="141" y="318" width="190" height="9.8" fill="url(#g10)"/><rect x="141" y="327.5" width="190" height="9.8" fill="url(#g11)"/><rect x="141" y="337" width="190" height="6.3" fill="url(#g12)"/><rect x="141" y="343" width="190" height="5.8" fill="url(#g13)"/><rect x="141" y="348.5" width="190" height="6.3" fill="url(#g14)"/><rect x="141" y="354.5" width="190" height="9.8" fill="url(#g15)"/><rect x="141" y="364" width="190" height="13.3" fill="url(#g16)"/><rect x="141" y="377" width="190" height="13.3" fill="url(#g17)"/><rect x="141" y="390" width="190" height="6.3" fill="url(#g18)"/><rect x="141" y="396" width="190" height="7.3" fill="url(#g19)"/><rect x="141" y="403" width="190" height="7.3" fill="url(#g20)"/><rect x="141" y="410" width="190" height="7.3" fill="url(#g21)"/><rect x="141" y="417" width="190" height="7.3" fill="url(#g22)"/><rect x="588" y="267.6" width="246" height="5.9" fill="url(#g23)"/><rect x="588" y="273.2" width="246" height="5.7" fill="url(#g24)"/><rect x="588" y="278.6" width="246" height="4.1" fill="url(#g25)"/><rect x="588" y="282.4" width="246" height="5.3" fill="url(#g26)"/><rect x="588" y="287.4" width="246" height="4.9" fill="url(#g27)"/><rect x="588" y="292" width="246" height="5.8" fill="url(#g28)"/><rect x="588" y="297.5" width="246" height="4.8" fill="url(#g29)"/><rect x="588" y="302" width="246" height="5.3" fill="url(#g30)"/><rect x="588" y="307" width="246" height="5.3" fill="url(#g31)"/><rect x="588" y="312" width="246" height="5.7" fill="url(#g32)"/><rect x="588" y="317.4" width="246" height="5.9" fill="url(#g33)"/><rect x="588" y="323" width="246" height="5.9" fill="url(#g34)"/><rect x="588" y="328.6" width="246" height="10.2" fill="url(#g35)"/><rect x="588" y="338.5" width="246" height="4.8" fill="url(#g36)"/><rect x="588" y="343" width="246" height="5.6" fill="url(#g37)"/><rect x="588" y="348.3" width="246" height="9.7" fill="url(#g38)"/><rect x="588" y="357.7" width="246" height="6.2" fill="url(#g39)"/><rect x="588" y="363.6" width="246" height="5.3" fill="url(#g40)"/><rect x="588" y="368.6" width="246" height="5.4" fill="url(#g41)"/><rect x="588" y="373.7" width="246" height="4.6" fill="url(#g42)"/><rect x="588" y="378" width="246" height="6.2" fill="url(#g43)"/><rect x="588" y="383.9" width="246" height="9.2" fill="url(#g44)"/><rect x="588" y="392.8" width="246" height="5.8" fill="url(#g45)"/><rect x="588" y="398.3" width="246" height="6.2" fill="url(#g46)"/><rect x="588" y="404.2" width="246" height="4.6" fill="url(#g47)"/><rect x="588" y="408.5" width="246" height="5.4" fill="url(#g48)"/><rect x="588" y="413.6" width="246" height="6.1" fill="url(#g49)"/><rect x="588" y="419.4" width="246" height="4.9" fill="url(#g50)"/></g><path d="M141 281 L141 309.5 C149 296 166 283.5 204 281Z" fill="#8c8c8c"/><rect x="141" y="278.9" width="693" height="2.3" fill="#f2fff0"/></g></svg>
<span class="t" style="left:837.03px;top:132.04px;font-size:8.58px;line-height:8.58px;color:#86b62c;transform:scaleX(0.8680);">15</span>
<span class="t" style="left:837.03px;top:179.04px;font-size:8.58px;line-height:8.58px;color:#86b62c;transform:scaleX(0.8654);">10</span>
<span class="t" style="left:126.43px;top:179.04px;font-size:8.58px;line-height:8.58px;color:#86b62c;transform:scaleX(0.8654);">10</span>
<span class="t" style="left:837.26px;top:226.04px;font-size:8.58px;line-height:8.58px;color:#86b62c;transform:scaleX(0.9837);">5</span>
<span class="t" style="left:130.06px;top:226.04px;font-size:8.58px;line-height:8.58px;color:#86b62c;transform:scaleX(0.9837);">5</span>
<span class="t" style="left:837.27px;top:273.04px;font-size:8.58px;line-height:8.58px;color:#86b62c;transform:scaleX(0.9757);">0</span>
<span class="t" style="left:837.26px;top:320.04px;font-size:8.58px;line-height:8.58px;color:#86b62c;transform:scaleX(0.9837);">5</span>
<span class="t" style="left:130.06px;top:320.04px;font-size:8.58px;line-height:8.58px;color:#86b62c;transform:scaleX(0.9837);">5</span>
<span class="t" style="left:837.03px;top:367.04px;font-size:8.58px;line-height:8.58px;color:#86b62c;transform:scaleX(0.8654);">10</span>
<span class="t" style="left:126.43px;top:367.04px;font-size:8.58px;line-height:8.58px;color:#86b62c;transform:scaleX(0.8654);">10</span>
<span class="t" style="left:837.03px;top:414.04px;font-size:8.58px;line-height:8.58px;color:#86b62c;transform:scaleX(0.8680);">15</span>
<span class="t" style="left:131.06px;top:430.14px;font-size:8.58px;line-height:8.58px;color:#86b62c;transform:scaleX(1.0211);">20 Hz</span>
<span class="t" style="left:229.43px;top:430.14px;font-size:8.58px;line-height:8.58px;color:#86b62c;transform:scaleX(1.0834);">50</span>
<span class="t" style="left:297.88px;top:430.14px;font-size:8.58px;line-height:8.58px;color:#86b62c;transform:scaleX(1.0961);">100</span>
<span class="t" style="left:689.12px;top:430.14px;font-size:8.58px;line-height:8.58px;color:#86b62c;transform:scaleX(1.1001);">5k</span>
<span class="t" style="left:756.69px;top:430.14px;font-size:8.58px;line-height:8.58px;color:#86b62c;transform:scaleX(1.0920);">10k</span>
<span class="t" style="left:826.10px;top:430.14px;font-size:8.58px;line-height:8.58px;color:#86b62c;transform:scaleX(1.1485);">20k</span>
<div style="left:111.2px;top:133.2px;width:27.8px;height:20.6px;background:#ff1010;border-radius:5.5px;"></div>
<span class="t" style="left:121.73px;top:137.84px;font-size:10.47px;line-height:10.47px;color:#fff;-webkit-text-stroke:0.15px #fff;transform:scaleX(1.1593);">0</span>
<div style="left:111.2px;top:406.2px;width:27.8px;height:20.5px;background:#0c0cfa;border-radius:5.5px;"></div>
<span class="t" style="left:116.72px;top:410.69px;font-size:10.76px;line-height:10.76px;color:#fff;-webkit-text-stroke:0.15px #fff;transform:scaleX(0.9967);">-60</span>
<div style="left:123px;top:262px;width:36px;height:36px;background:#2e7a08;border:2px solid #5ede2c;border-radius:18px;"></div>
<span class="t" style="left:125.86px;top:273.23px;font-size:15.55px;line-height:15.55px;color:#70ff3c;-webkit-text-stroke:0.3px #70ff3c;transform:scaleX(0.9723);">HPF</span>
<div style="left:260.7px;top:260.5px;width:38.6px;height:38.6px;border-radius:20px;background:radial-gradient(circle at 50% 42%,#fcfcfc 0,#f3f3f3 50%,#e0e0e0 80%,#c4c4c4 100%);box-shadow:0 2px 3px rgba(0,0,0,.6),0 0 1px rgba(0,0,0,.5);"></div>
<span class="t" style="left:274.07px;top:270.52px;font-size:20.06px;line-height:20.06px;color:#2a2a2a;font-weight:bold;transform:scaleX(1.0030);">1</span>
<div style="left:582.7px;top:260.5px;width:38.6px;height:38.6px;border-radius:20px;background:radial-gradient(circle at 50% 42%,#fcfcfc 0,#f3f3f3 50%,#e0e0e0 80%,#c4c4c4 100%);box-shadow:0 2px 3px rgba(0,0,0,.6),0 0 1px rgba(0,0,0,.5);"></div>
<span class="t" style="left:596.55px;top:270.52px;font-size:20.06px;line-height:20.06px;color:#2a2a2a;font-weight:bold;transform:scaleX(1.0030);">3</span>
<div style="left:761.7px;top:260.5px;width:38.6px;height:38.6px;border-radius:20px;background:radial-gradient(circle at 50% 42%,#fcfcfc 0,#f3f3f3 50%,#e0e0e0 80%,#c4c4c4 100%);box-shadow:0 2px 3px rgba(0,0,0,.6),0 0 1px rgba(0,0,0,.5);"></div>
<span class="t" style="left:775.32px;top:270.52px;font-size:20.06px;line-height:20.06px;color:#2a2a2a;font-weight:bold;transform:scaleX(1.0030);">4</span>
<div style="left:116px;top:458px;width:179.4px;height:262px;border:2px solid #d8d8d8;border-radius:7px;"></div>
<span class="t" style="left:168.02px;top:477.89px;font-size:22.09px;line-height:22.09px;color:#0a0a0a;-webkit-text-stroke:0.7px #0a0a0a;transform:scaleX(1.0650);">Band 1</span>
<div style="left:134.3px;top:552px;width:142.4px;height:32px;background:#dcdcdc;border:2px solid #161616;border-radius:6px;overflow:hidden;"><div style="left:-2px;top:-2px;width:71px;height:32px;background:#6ea806;border-right:1.5px solid #161616"></div></div>
<span class="t" style="left:149.63px;top:559.06px;font-size:17.30px;line-height:17.30px;color:#fff;-webkit-text-stroke:0.4px #fff;transform:scaleX(1.1121);">Shelf</span>
<span class="t" style="left:221.07px;top:559.06px;font-size:17.30px;line-height:17.30px;color:#0a0a0a;-webkit-text-stroke:0.4px #0a0a0a;transform:scaleX(1.2182);">Bell</span>
<span class="t" style="left:127.29px;top:606.06px;font-size:19.19px;line-height:19.19px;color:#0a0a0a;-webkit-text-stroke:0.65px #0a0a0a;transform:scaleX(1.1497);">G</span>
<div style="left:148px;top:599.8px;width:139.3px;height:32.2px;background:#000;border-radius:5px;"></div>
<div style="left:209.6px;top:603.3px;width:16px;height:25.4px;background:linear-gradient(#ecefea,#e0e3de);border-radius:3px;"><div style="left:4.4px;top:4px;width:1.6px;height:17px;background:#dadcd6"></div><div style="left:10px;top:4px;width:1.6px;height:17px;background:#dadcd6"></div></div>
<span class="t" style="left:128.52px;top:646.06px;font-size:19.19px;line-height:19.19px;color:#0a0a0a;-webkit-text-stroke:0.65px #0a0a0a;transform:scaleX(1.1303);">F</span>
<div style="left:148px;top:639.8px;width:139.3px;height:32.2px;background:#000;border-radius:5px;"></div>
<div style="left:151.4px;top:643.1px;width:27.4px;height:25.4px;background:#12a6d2;border-radius:1.5px;"></div>
<div style="left:174.8px;top:643.3px;width:16px;height:25.4px;background:linear-gradient(#ecefea,#e0e3de);border-radius:3px;"><div style="left:4.4px;top:4px;width:1.6px;height:17px;background:#dadcd6"></div><div style="left:10px;top:4px;width:1.6px;height:17px;background:#dadcd6"></div></div>
<div style="left:303px;top:458px;width:179.4px;height:262px;border:2px solid #d8d8d8;border-radius:7px;"></div>
<span class="t" style="left:355.02px;top:477.89px;font-size:22.09px;line-height:22.09px;color:#0a0a0a;-webkit-text-stroke:0.7px #0a0a0a;transform:scaleX(1.0655);">Band 2</span>
<span class="t" style="left:314.29px;top:606.06px;font-size:19.19px;line-height:19.19px;color:#0a0a0a;-webkit-text-stroke:0.65px #0a0a0a;transform:scaleX(1.1497);">G</span>
<div style="left:335px;top:599.8px;width:139.3px;height:32.2px;background:#000;border-radius:5px;"></div>
<div style="left:396.6px;top:603.3px;width:16px;height:25.4px;background:linear-gradient(#ecefea,#e0e3de);border-radius:3px;"><div style="left:4.4px;top:4px;width:1.6px;height:17px;background:#dadcd6"></div><div style="left:10px;top:4px;width:1.6px;height:17px;background:#dadcd6"></div></div>
<span class="t" style="left:315.52px;top:646.06px;font-size:19.19px;line-height:19.19px;color:#0a0a0a;-webkit-text-stroke:0.65px #0a0a0a;transform:scaleX(1.1303);">F</span>
<div style="left:335px;top:639.8px;width:139.3px;height:32.2px;background:#000;border-radius:5px;"></div>
<div style="left:338.4px;top:643.1px;width:40.6px;height:25.4px;background:#3aa;border-radius:1.5px;"></div>
<div style="left:375px;top:643.3px;width:16px;height:25.4px;background:linear-gradient(#ecefea,#e0e3de);border-radius:3px;"><div style="left:4.4px;top:4px;width:1.6px;height:17px;background:#dadcd6"></div><div style="left:10px;top:4px;width:1.6px;height:17px;background:#dadcd6"></div></div>
<span class="t" style="left:314.06px;top:686.06px;font-size:19.19px;line-height:19.19px;color:#0a0a0a;-webkit-text-stroke:0.65px #0a0a0a;transform:scaleX(1.1453);">Q</span>
<div style="left:335px;top:679.8px;width:139.3px;height:32.2px;background:#000;border-radius:5px;"></div>
<div style="left:490px;top:458px;width:179.4px;height:262px;border:2px solid #d8d8d8;border-radius:7px;"></div>
<span class="t" style="left:542.02px;top:477.89px;font-size:22.09px;line-height:22.09px;color:#0a0a0a;-webkit-text-stroke:0.7px #0a0a0a;transform:scaleX(1.0633);">Band 3</span>
<span class="t" style="left:501.29px;top:606.06px;font-size:19.19px;line-height:19.19px;color:#0a0a0a;-webkit-text-stroke:0.65px #0a0a0a;transform:scaleX(1.1497);">G</span>
<div style="left:522px;top:599.8px;width:139.3px;height:32.2px;background:#000;border-radius:5px;"></div>
<div style="left:583.6px;top:603.3px;width:16px;height:25.4px;background:linear-gradient(#ecefea,#e0e3de);border-radius:3px;"><div style="left:4.4px;top:4px;width:1.6px;height:17px;background:#dadcd6"></div><div style="left:10px;top:4px;width:1.6px;height:17px;background:#dadcd6"></div></div>
<span class="t" style="left:502.52px;top:646.06px;font-size:19.19px;line-height:19.19px;color:#0a0a0a;-webkit-text-stroke:0.65px #0a0a0a;transform:scaleX(1.1303);">F</span>
<div style="left:522px;top:639.8px;width:139.3px;height:32.2px;background:#000;border-radius:5px;"></div>
<div style="left:525.4px;top:643.1px;width:81.6px;height:25.4px;background:#9a62e6;border-radius:1.5px;"></div>
<div style="left:603px;top:643.3px;width:16px;height:25.4px;background:linear-gradient(#ecefea,#e0e3de);border-radius:3px;"><div style="left:4.4px;top:4px;width:1.6px;height:17px;background:#dadcd6"></div><div style="left:10px;top:4px;width:1.6px;height:17px;background:#dadcd6"></div></div>
<span class="t" style="left:501.06px;top:686.06px;font-size:19.19px;line-height:19.19px;color:#0a0a0a;-webkit-text-stroke:0.65px #0a0a0a;transform:scaleX(1.1453);">Q</span>
<div style="left:522px;top:679.8px;width:139.3px;height:32.2px;background:#000;border-radius:5px;"></div>
<div style="left:677px;top:458px;width:179.4px;height:262px;border:2px solid #d8d8d8;border-radius:7px;"></div>
<span class="t" style="left:729.03px;top:477.89px;font-size:22.09px;line-height:22.09px;color:#0a0a0a;-webkit-text-stroke:0.7px #0a0a0a;transform:scaleX(1.0582);">Band 4</span>
<div style="left:695.3px;top:552px;width:142.4px;height:32px;background:#dcdcdc;border:2px solid #161616;border-radius:6px;overflow:hidden;"><div style="left:-2px;top:-2px;width:71px;height:32px;background:#6ea806;border-right:1.5px solid #161616"></div></div>
<span class="t" style="left:710.63px;top:559.06px;font-size:17.30px;line-height:17.30px;color:#fff;-webkit-text-stroke:0.4px #fff;transform:scaleX(1.1121);">Shelf</span>
<span class="t" style="left:782.07px;top:559.06px;font-size:17.30px;line-height:17.30px;color:#0a0a0a;-webkit-text-stroke:0.4px #0a0a0a;transform:scaleX(1.2182);">Bell</span>
<span class="t" style="left:688.29px;top:606.06px;font-size:19.19px;line-height:19.19px;color:#0a0a0a;-webkit-text-stroke:0.65px #0a0a0a;transform:scaleX(1.1497);">G</span>
<div style="left:709px;top:599.8px;width:139.3px;height:32.2px;background:#000;border-radius:5px;"></div>
<div style="left:770.6px;top:603.3px;width:16px;height:25.4px;background:linear-gradient(#ecefea,#e0e3de);border-radius:3px;"><div style="left:4.4px;top:4px;width:1.6px;height:17px;background:#dadcd6"></div><div style="left:10px;top:4px;width:1.6px;height:17px;background:#dadcd6"></div></div>
<span class="t" style="left:689.52px;top:646.06px;font-size:19.19px;line-height:19.19px;color:#0a0a0a;-webkit-text-stroke:0.65px #0a0a0a;transform:scaleX(1.1303);">F</span>
<div style="left:709px;top:639.8px;width:139.3px;height:32.2px;background:#000;border-radius:5px;"></div>
<div style="left:712.4px;top:643.1px;width:112.2px;height:25.4px;background:#b943c9;border-radius:1.5px;"></div>
<div style="left:820.6px;top:643.3px;width:16px;height:25.4px;background:linear-gradient(#ecefea,#e0e3de);border-radius:3px;"><div style="left:4.4px;top:4px;width:1.6px;height:17px;background:#dadcd6"></div><div style="left:10px;top:4px;width:1.6px;height:17px;background:#dadcd6"></div></div>
<div style="left:116.6px;top:728px;width:95.4px;height:32px;background:#dcdcdc;border:2px solid #161616;border-radius:6px;"></div>
<span class="t" style="left:145.17px;top:734.86px;font-size:17.30px;line-height:17.30px;color:#0a0a0a;-webkit-text-stroke:0.4px #0a0a0a;transform:scaleX(1.0775);">HPF</span>
<div style="left:220px;top:728px;width:262px;height:32px;background:#000;border-radius:5px;"></div>
<div style="left:223px;top:731px;width:16px;height:25.4px;background:linear-gradient(#ecefea,#e0e3de);border-radius:3px;"><div style="left:4.4px;top:4px;width:1.6px;height:17px;background:#dadcd6"></div><div style="left:10px;top:4px;width:1.6px;height:17px;background:#dadcd6"></div></div>
<svg style="left:440px;top:100px" width="40" height="18" viewBox="440 100 40 18"><path d="M444.4 117.6 L458.6 102.2 Q459.9 100.8 461.2 102.2 L475.6 117.6Z" fill="#f4f4f4"/></svg>
<div style="left:330px;top:117px;width:260px;height:643px;background:#fff;border-radius:7px 7px 0 0;overflow:hidden;"><div style="left:0;top:0;width:260px;height:40px;background:#ececec;border-bottom:1px solid #7e7e7e"></div><div style="left:0;top:79px;width:260px;height:1px;background:#cdcdcd"></div><div style="left:0;top:119px;width:260px;height:1px;background:#cdcdcd"></div><div style="left:0;top:159px;width:260px;height:1px;background:#cdcdcd"></div><div style="left:125.6px;top:120px;width:1px;height:39px;background:#cdcdcd"></div><div style="left:0;top:160px;width:260px;height:19.6px;background:#ececec"></div><div style="left:0;top:243.3px;width:260px;height:1px;background:#d2d2d2"></div><div style="left:0;top:307.3px;width:260px;height:1px;background:#d2d2d2"></div><div style="left:0;top:371.3px;width:260px;height:1px;background:#d2d2d2"></div><div style="left:0;top:435.3px;width:260px;height:1px;background:#d2d2d2"></div><div style="left:0;top:499.3px;width:260px;height:1px;background:#d2d2d2"></div><div style="left:0;top:563.3px;width:260px;height:1px;background:#d2d2d2"></div><div style="left:0;top:627.3px;width:260px;height:1px;background:#d2d2d2"></div><div style="left:0;top:691.3px;width:260px;height:1px;background:#d2d2d2"></div></div>
<span class="t" style="left:435.98px;top:129.89px;font-size:14.54px;line-height:14.54px;color:#0e0e0e;-webkit-text-stroke:0.5px #0e0e0e;transform:scaleX(1.1053);">Preset</span>
<span class="t" style="left:345.78px;top:169.99px;font-size:14.54px;line-height:14.54px;color:#0e0e0e;-webkit-text-stroke:0.5px #0e0e0e;transform:scaleX(1.0909);">Store Preset</span>
<span class="t" style="left:345.22px;top:210.19px;font-size:14.54px;line-height:14.54px;color:#0e0e0e;-webkit-text-stroke:0.5px #0e0e0e;transform:scaleX(1.0774);">Reset Equalizer</span>
<span class="t" style="left:369.74px;top:250.05px;font-size:14.83px;line-height:14.83px;color:#0e0e0e;-webkit-text-stroke:0.5px #0e0e0e;transform:scaleX(1.1469);">Copy</span>
<span class="t" style="left:503.58px;top:250.05px;font-size:14.83px;line-height:14.83px;color:#c6c6c6;-webkit-text-stroke:0.3px #c6c6c6;transform:scaleX(1.1655);">Paste</span>
<span class="t" style="left:345.43px;top:280.30px;font-size:13.23px;line-height:13.23px;color:#0e0e0e;-webkit-text-stroke:0.6px #0e0e0e;transform:scaleX(0.9898);">FACTORY</span>
<svg style="left:566px;top:172px" width="8" height="12" viewBox="566 172 8 12"><path d="M568.4 174.2 L571.8 177.6 L568.4 181" fill="none" stroke="#8a8a8a" stroke-width="1.1"/></svg>
<span class="t" style="left:412.91px;top:322.39px;font-size:14.54px;line-height:14.54px;color:#0e0e0e;-webkit-text-stroke:0.55px #0e0e0e;transform:scaleX(1.0854);">Bass - Bright</span>
<span class="t" style="left:533.35px;top:343.68px;font-size:11.48px;line-height:11.48px;color:#8a8a8a;-webkit-text-stroke:0.45px #8a8a8a;transform:scaleX(1.0530);">Vintage</span>
<span class="t" style="left:412.91px;top:386.39px;font-size:14.54px;line-height:14.54px;color:#0e0e0e;-webkit-text-stroke:0.55px #0e0e0e;transform:scaleX(1.0842);">Bass - Mid Boost</span>
<span class="t" style="left:532.18px;top:407.68px;font-size:11.48px;line-height:11.48px;color:#8a8a8a;-webkit-text-stroke:0.45px #8a8a8a;transform:scaleX(1.0846);">Modern</span>
<span class="t" style="left:412.90px;top:450.39px;font-size:14.54px;line-height:14.54px;color:#0e0e0e;-webkit-text-stroke:0.55px #0e0e0e;transform:scaleX(1.0882);">Brass - Bright</span>
<span class="t" style="left:532.18px;top:471.68px;font-size:11.48px;line-height:11.48px;color:#8a8a8a;-webkit-text-stroke:0.45px #8a8a8a;transform:scaleX(1.0846);">Modern</span>
<span class="t" style="left:412.91px;top:514.39px;font-size:14.54px;line-height:14.54px;color:#0e0e0e;-webkit-text-stroke:0.55px #0e0e0e;transform:scaleX(1.0809);">Brass - Mid Scoop</span>
<span class="t" style="left:532.18px;top:535.68px;font-size:11.48px;line-height:11.48px;color:#8a8a8a;-webkit-text-stroke:0.45px #8a8a8a;transform:scaleX(1.0846);">Modern</span>
<span class="t" style="left:412.94px;top:578.39px;font-size:14.54px;line-height:14.54px;color:#0e0e0e;-webkit-text-stroke:0.55px #0e0e0e;transform:scaleX(1.0550);">Drum - OH 1</span>
<span class="t" style="left:532.18px;top:599.68px;font-size:11.48px;line-height:11.48px;color:#8a8a8a;-webkit-text-stroke:0.45px #8a8a8a;transform:scaleX(1.0846);">Modern</span>
<span class="t" style="left:412.89px;top:642.39px;font-size:14.54px;line-height:14.54px;color:#0e0e0e;-webkit-text-stroke:0.55px #0e0e0e;transform:scaleX(1.0951);">Drum - OH 2</span>
<span class="t" style="left:533.35px;top:663.68px;font-size:11.48px;line-height:11.48px;color:#8a8a8a;-webkit-text-stroke:0.45px #8a8a8a;transform:scaleX(1.0530);">Vintage</span>
<span class="t" style="left:412.90px;top:706.39px;font-size:14.54px;line-height:14.54px;color:#0e0e0e;-webkit-text-stroke:0.55px #0e0e0e;transform:scaleX(1.0880);">Drum Bus - Big</span>
<span class="t" style="left:533.35px;top:727.68px;font-size:11.48px;line-height:11.48px;color:#8a8a8a;-webkit-text-stroke:0.45px #8a8a8a;transform:scaleX(1.0530);">Vintage</span>
<svg style="left:330px;top:297px" width="260" height="463" viewBox="330 297 260 463"><g transform="translate(0 0)"><path d="M362.4 334.8 L382 314.4" stroke="#000" stroke-width="2.1" fill="none"/><path d="M381.2 315.1 L387.5 311.3" stroke="#000" stroke-width="3.3" stroke-linecap="round" fill="none"/><path d="M361.4 335 L364.6 337.6 L368 336.4 Q367.8 339.4 364.6 341.2 Q362.4 343.2 361.6 346.4 Q360 349.8 356.4 349.9 L353 345 L356 338Z" fill="#fff" stroke="#000" stroke-width="0.7" stroke-linejoin="round"/><path d="M363.4 327.2 C361 326.6 359.6 329.4 358.2 332.2 C356.4 335.6 352.6 335.8 350.2 337.8 C347 340.6 347.6 345.6 351.2 348.4 C353.2 350 355.6 350.4 357.2 349.6 C358.6 346.4 356.4 344.4 357.4 342.2 C358.2 340.4 356 339.4 357.2 337.6 C358.2 336 360 335.6 361.6 334.4 C362.6 332.2 364.8 329.6 363.4 327.2Z" fill="#000"/><path d="M351.6 344.4 L353.4 342.8 L355.4 345 L353.6 346.6Z" fill="#fff"/><path d="M357.8 338.6 L359.4 339.8 L358.2 341 L359.6 342" stroke="#000" stroke-width="0.8" fill="none"/></g><g transform="translate(0 64)"><path d="M362.4 334.8 L382 314.4" stroke="#000" stroke-width="2.1" fill="none"/><path d="M381.2 315.1 L387.5 311.3" stroke="#000" stroke-width="3.3" stroke-linecap="round" fill="none"/><path d="M361.4 335 L364.6 337.6 L368 336.4 Q367.8 339.4 364.6 341.2 Q362.4 343.2 361.6 346.4 Q360 349.8 356.4 349.9 L353 345 L356 338Z" fill="#fff" stroke="#000" stroke-width="0.7" stroke-linejoin="round"/><path d="M363.4 327.2 C361 326.6 359.6 329.4 358.2 332.2 C356.4 335.6 352.6 335.8 350.2 337.8 C347 340.6 347.6 345.6 351.2 348.4 C353.2 350 355.6 350.4 357.2 349.6 C358.6 346.4 356.4 344.4 357.4 342.2 C358.2 340.4 356 339.4 357.2 337.6 C358.2 336 360 335.6 361.6 334.4 C362.6 332.2 364.8 329.6 363.4 327.2Z" fill="#000"/><path d="M351.6 344.4 L353.4 342.8 L355.4 345 L353.6 346.6Z" fill="#fff"/><path d="M357.8 338.6 L359.4 339.8 L358.2 341 L359.6 342" stroke="#000" stroke-width="0.8" fill="none"/></g><g transform="translate(349.6 476.2) rotate(-45)"><path d="M0 0 H44" stroke="#000" stroke-width="1.7" fill="none"/><circle cx="0.2" cy="0" r="1.5" fill="#000"/><path d="M40.6 0.9 Q46.6 1.6 49 5.7 L49 -5.7 Q46.6 -1.6 40.6 -0.9Z" fill="#000" stroke="#000" stroke-width="0.5" stroke-linejoin="round"/><rect x="5.4" y="0" width="35" height="5.9" rx="2.95" fill="none" stroke="#000" stroke-width="1.25"/><path d="M10 5.7 H16 M25 5.7 H36" stroke="#000" stroke-width="2.4" fill="none"/><path d="M16.4 -3.4 V8.8 M19.6 -3.4 V8.8 M22.8 -3.4 V8.8" stroke="#000" stroke-width="1.8" fill="none"/><path d="M18 -3.4 V8.8 M21.2 -3.4 V8.8" stroke="#fff" stroke-width="1.1" fill="none"/></g><g transform="translate(349.6 540.2) rotate(-45)"><path d="M0 0 H44" stroke="#000" stroke-width="1.7" fill="none"/><circle cx="0.2" cy="0" r="1.5" fill="#000"/><path d="M40.6 0.9 Q46.6 1.6 49 5.7 L49 -5.7 Q46.6 -1.6 40.6 -0.9Z" fill="#000" stroke="#000" stroke-width="0.5" stroke-linejoin="round"/><rect x="5.4" y="0" width="35" height="5.9" rx="2.95" fill="none" stroke="#000" stroke-width="1.25"/><path d="M10 5.7 H16 M25 5.7 H36" stroke="#000" stroke-width="2.4" fill="none"/><path d="M16.4 -3.4 V8.8 M19.6 -3.4 V8.8 M22.8 -3.4 V8.8" stroke="#000" stroke-width="1.8" fill="none"/><path d="M18 -3.4 V8.8 M21.2 -3.4 V8.8" stroke="#fff" stroke-width="1.1" fill="none"/></g><g transform="translate(0 553)"><defs><clipPath id="kc4"><rect x="348" y="20" width="40" height="32.7" rx="1.6"/></clipPath></defs><ellipse cx="363.5" cy="17.3" rx="14.6" ry="4.3" fill="#fff" stroke="#000" stroke-width="2"/><path d="M349 18.2 Q363.5 26 378 18.2" stroke="#000" stroke-width="1.4" fill="none"/><ellipse cx="363.5" cy="16" rx="1.7" ry="0.95" fill="#000"/><g clip-path="url(#kc4)"><ellipse cx="360.4" cy="53.3" rx="21.5" ry="25.9" fill="none" stroke="#000" stroke-width="1.3"/><ellipse cx="360.4" cy="53.3" rx="18.4" ry="23.1" fill="#000"/><rect x="348" y="44" width="8" height="9" fill="#000"/></g><rect x="362.4" y="23.6" width="26.3" height="14" fill="#fff"/><rect x="363" y="24.1" width="25.2" height="2.4" fill="#000"/><path d="M363 28.6 H388.2 V33.7 H363Z M364.6 28.6 l1 2 l1 -2 M369.2 28.6 l1 2 l1 -2 M373.8 28.6 l1 2 l1 -2 M378.4 28.6 l1 2 l1 -2 M383 28.6 l1 2 l1 -2" fill="#000"/><path d="M365.6 27.8 l1.2 2.4 l1.2 -2.4z M371.6 27.8 l1.2 2.4 l1.2 -2.4z M377.6 27.8 l1.2 2.4 l1.2 -2.4z M383.6 27.8 l1.2 2.4 l1.2 -2.4z" fill="#fff"/><rect x="363" y="36.1" width="25.2" height="1" fill="#000"/></g><g transform="translate(0 617)"><defs><clipPath id="kc5"><rect x="348" y="20" width="40" height="32.7" rx="1.6"/></clipPath></defs><ellipse cx="363.5" cy="17.3" rx="14.6" ry="4.3" fill="#fff" stroke="#000" stroke-width="2"/><path d="M349 18.2 Q363.5 26 378 18.2" stroke="#000" stroke-width="1.4" fill="none"/><ellipse cx="363.5" cy="16" rx="1.7" ry="0.95" fill="#000"/><g clip-path="url(#kc5)"><ellipse cx="360.4" cy="53.3" rx="21.5" ry="25.9" fill="none" stroke="#000" stroke-width="1.3"/><ellipse cx="360.4" cy="53.3" rx="18.4" ry="23.1" fill="#000"/><rect x="348" y="44" width="8" height="9" fill="#000"/></g><rect x="362.4" y="23.6" width="26.3" height="14" fill="#fff"/><rect x="363" y="24.1" width="25.2" height="2.4" fill="#000"/><path d="M363 28.6 H388.2 V33.7 H363Z M364.6 28.6 l1 2 l1 -2 M369.2 28.6 l1 2 l1 -2 M373.8 28.6 l1 2 l1 -2 M378.4 28.6 l1 2 l1 -2 M383 28.6 l1 2 l1 -2" fill="#000"/><path d="M365.6 27.8 l1.2 2.4 l1.2 -2.4z M371.6 27.8 l1.2 2.4 l1.2 -2.4z M377.6 27.8 l1.2 2.4 l1.2 -2.4z M383.6 27.8 l1.2 2.4 l1.2 -2.4z" fill="#fff"/><rect x="363" y="36.1" width="25.2" height="1" fill="#000"/></g><g transform="translate(0 681)"><defs><clipPath id="kc6"><rect x="348" y="20" width="40" height="32.7" rx="1.6"/></clipPath></defs><ellipse cx="363.5" cy="17.3" rx="14.6" ry="4.3" fill="#fff" stroke="#000" stroke-width="2"/><path d="M349 18.2 Q363.5 26 378 18.2" stroke="#000" stroke-width="1.4" fill="none"/><ellipse cx="363.5" cy="16" rx="1.7" ry="0.95" fill="#000"/><g clip-path="url(#kc6)"><ellipse cx="360.4" cy="53.3" rx="21.5" ry="25.9" fill="none" stroke="#000" stroke-width="1.3"/><ellipse cx="360.4" cy="53.3" rx="18.4" ry="23.1" fill="#000"/><rect x="348" y="44" width="8" height="9" fill="#000"/></g><rect x="362.4" y="23.6" width="26.3" height="14" fill="#fff"/><rect x="363" y="24.1" width="25.2" height="2.4" fill="#000"/><path d="M363 28.6 H388.2 V33.7 H363Z M364.6 28.6 l1 2 l1 -2 M369.2 28.6 l1 2 l1 -2 M373.8 28.6 l1 2 l1 -2 M378.4 28.6 l1 2 l1 -2 M383 28.6 l1 2 l1 -2" fill="#000"/><path d="M365.6 27.8 l1.2 2.4 l1.2 -2.4z M371.6 27.8 l1.2 2.4 l1.2 -2.4z M377.6 27.8 l1.2 2.4 l1.2 -2.4z M383.6 27.8 l1.2 2.4 l1.2 -2.4z" fill="#fff"/><rect x="363" y="36.1" width="25.2" height="1" fill="#000"/></g><g transform="translate(0 448)"><path d="M362.4 334.8 L382 314.4" stroke="#000" stroke-width="2.1" fill="none"/><path d="M381.2 315.1 L387.5 311.3" stroke="#000" stroke-width="3.3" stroke-linecap="round" fill="none"/><path d="M361.4 335 L364.6 337.6 L368 336.4 Q367.8 339.4 364.6 341.2 Q362.4 343.2 361.6 346.4 Q360 349.8 356.4 349.9 L353 345 L356 338Z" fill="#fff" stroke="#000" stroke-width="0.7" stroke-linejoin="round"/><path d="M363.4 327.2 C361 326.6 359.6 329.4 358.2 332.2 C356.4 335.6 352.6 335.8 350.2 337.8 C347 340.6 347.6 345.6 351.2 348.4 C353.2 350 355.6 350.4 357.2 349.6 C358.6 346.4 356.4 344.4 357.4 342.2 C358.2 340.4 356 339.4 357.2 337.6 C358.2 336 360 335.6 361.6 334.4 C362.6 332.2 364.8 329.6 363.4 327.2Z" fill="#000"/><path d="M351.6 344.4 L353.4 342.8 L355.4 345 L353.6 346.6Z" fill="#fff"/><path d="M357.8 338.6 L359.4 339.8 L358.2 341 L359.6 342" stroke="#000" stroke-width="0.8" fill="none"/></g></svg>
<div style="left:863px;top:61px;width:1px;height:707px;background:#1c1c1c;"></div>
<div style="left:864px;top:61px;width:107px;height:9.4px;background:#fff;"></div>
<div style="left:864px;top:70.4px;width:108px;height:194.6px;background:#2d2d2d;"></div>
<div style="left:868px;top:74px;width:100px;height:114px;background:#000;border-radius:6px;"></div>
<div style="left:872px;top:78px;width:92px;height:32px;background:#2b2b2d;border-radius:5px;"></div>
<div style="left:872px;top:114px;width:92px;height:32px;background:#2c3b0d;border-radius:0;overflow:hidden;"><div style="left:0;top:0;width:92px;height:32px;background:repeating-linear-gradient(90deg,#3f5216 0,#3f5216 2px,#2a380c 2px,#2a380c 3px)"></div><div style="left:0;top:15.3px;width:92px;height:1.6px;background:repeating-linear-gradient(90deg,#f4f6e0 0,#f4f6e0 2px,#c3cf96 2px,#c3cf96 3px)"></div></div>
<div style="left:872px;top:150px;width:92px;height:32px;background:#2b2b2d;border-radius:5px;"></div>
<div style="left:876px;top:167px;width:84px;height:9px;border:1.6px solid #707070;border-radius:2px;background:#262628;"></div>
<div style="left:876.00px;top:82.10px;width:7.5px;height:6.7px;background:#5a5a5a;border-radius:1px"></div><div style="left:885.58px;top:82.10px;width:7.5px;height:6.7px;background:#5a5a5a;border-radius:1px"></div><div style="left:895.16px;top:82.10px;width:7.5px;height:6.7px;background:#5a5a5a;border-radius:1px"></div><div style="left:904.74px;top:82.10px;width:7.5px;height:6.7px;background:#5a5a5a;border-radius:1px"></div><div style="left:914.32px;top:82.10px;width:7.5px;height:6.7px;background:#5a5a5a;border-radius:1px"></div><div style="left:923.90px;top:82.10px;width:7.5px;height:6.7px;background:#5a5a5a;border-radius:1px"></div><div style="left:933.48px;top:82.10px;width:7.5px;height:6.7px;background:#5a5a5a;border-radius:1px"></div><div style="left:943.06px;top:82.10px;width:7.5px;height:6.7px;background:#5a5a5a;border-radius:1px"></div><div style="left:952.64px;top:82.10px;width:7.5px;height:6.7px;background:#5a5a5a;border-radius:1px"></div><div style="left:876.00px;top:90.80px;width:7.5px;height:6.5px;background:#5a5a5a;border-radius:1px"></div><div style="left:885.58px;top:90.80px;width:7.5px;height:6.5px;background:#5a5a5a;border-radius:1px"></div><div style="left:895.16px;top:90.80px;width:7.5px;height:6.5px;background:#5a5a5a;border-radius:1px"></div><div style="left:904.74px;top:90.80px;width:7.5px;height:6.5px;background:#5a5a5a;border-radius:1px"></div><div style="left:914.32px;top:90.80px;width:7.5px;height:6.5px;background:#5a5a5a;border-radius:1px"></div><div style="left:923.90px;top:90.80px;width:7.5px;height:6.5px;background:#5a5a5a;border-radius:1px"></div><div style="left:933.48px;top:90.80px;width:7.5px;height:6.5px;background:#5a5a5a;border-radius:1px"></div><div style="left:943.06px;top:90.80px;width:7.5px;height:6.5px;background:#5a5a5a;border-radius:1px"></div><div style="left:952.64px;top:90.80px;width:7.5px;height:6.5px;background:#5a5a5a;border-radius:1px"></div><div style="left:876.00px;top:99.2px;width:17.2px;height:6.8px;background:#5a5a5a;border-radius:1px"></div><div style="left:895.10px;top:99.2px;width:17.2px;height:6.8px;background:#5a5a5a;border-radius:1px"></div><div style="left:914.20px;top:99.2px;width:17.2px;height:6.8px;background:#5a5a5a;border-radius:1px"></div>
<div style="left:868px;top:193px;width:100px;height:32px;background:#000;border-radius:5px;"></div>
<svg style="left:868px;top:193px" width="100" height="32" viewBox="0 0 100 32"><path d="M4 5.6 L50 13 L96 5.6 L96 25.6 L50 17.6 L4 25.6Z" fill="#6f6f6f"/></svg>
<div style="left:910px;top:196px;width:16px;height:25.6px;background:linear-gradient(#e9ebe7,#dcdfda);border-radius:3px;"><div style="left:4.4px;top:4px;width:1.6px;height:17px;background:#d8dbd5"></div><div style="left:10px;top:4px;width:1.6px;height:17px;background:#d8dbd5"></div></div>
<div style="left:868px;top:229px;width:100px;height:32px;background:#dcdcdc;border:2px solid #161616;border-radius:6px;"></div>
<span class="t" style="left:895.36px;top:236.39px;font-size:16.42px;line-height:16.42px;color:#0a0a0a;-webkit-text-stroke:0.4px #0a0a0a;transform:scaleX(1.2196);">Mute</span>
<div style="left:864px;top:265px;width:108px;height:372px;background:#fff;"></div>
<div style="left:868px;top:269px;width:100px;height:363.5px;background:#000;border:1.5px solid #000;border-radius:6px;"></div>
<div style="left:869.7px;top:270.7px;width:96.6px;height:360.1px;background:#000;border:2.2px solid #4b4b4b;border-radius:4.5px;"></div>
<div style="left:895px;top:285px;width:10px;height:9.2px;background:#531b07;"></div>
<div style="left:895px;top:298.4px;width:10px;height:61.8px;background:#452a08;"></div>
<div style="left:895px;top:336px;width:10px;height:3.1px;background:#f5b429;"></div>
<div style="left:895px;top:344px;width:10px;height:16.2px;background:#eda51e;"></div>
<div style="left:895px;top:364.6px;width:10px;height:250px;background:linear-gradient(90deg,#8fd83c,#a4e458 50%,#8fd83c);box-shadow:0 0 3px #58a818;"></div>
<div style="left:907px;top:285px;width:10px;height:9.2px;background:#531b07;"></div>
<div style="left:907px;top:298.4px;width:10px;height:61.8px;background:#452a08;"></div>
<div style="left:907px;top:341.6px;width:10px;height:3.1px;background:#f5b429;"></div>
<div style="left:907px;top:350.2px;width:10px;height:10px;background:#eda51e;"></div>
<div style="left:907px;top:364.6px;width:10px;height:250px;background:linear-gradient(90deg,#8fd83c,#a4e458 50%,#8fd83c);box-shadow:0 0 3px #58a818;"></div>
<div style="left:924px;top:308.4px;width:6px;height:291.6px;background:#000;border:1px solid #8a8a8a;border-radius:3px;"></div>
<div style="left:924px;top:458px;width:6px;height:142px;background:#5a5a5a;border-radius:0 0 3px 3px;"></div>
<svg style="left:941.30px;top:300px" width="6" height="310" viewBox="0 300 6 310"><circle cx="3" cy="309.60" r="1.05" fill="#fff"/><circle cx="3" cy="326.60" r="1.05" fill="#fff"/><circle cx="3" cy="343.50" r="1.05" fill="#fff"/><circle cx="3" cy="360.50" r="1.05" fill="#fff"/><circle cx="3" cy="394.60" r="1.05" fill="#fff"/><circle cx="3" cy="411.40" r="1.05" fill="#fff"/><circle cx="3" cy="428.60" r="1.05" fill="#fff"/><circle cx="3" cy="445.60" r="1.05" fill="#fff"/><circle cx="3" cy="462.80" r="1.05" fill="#fff"/><circle cx="3" cy="480.00" r="1.05" fill="#fff"/><circle cx="3" cy="497.20" r="1.05" fill="#fff"/><circle cx="3" cy="514.40" r="1.05" fill="#fff"/><circle cx="3" cy="531.50" r="1.05" fill="#fff"/><circle cx="3" cy="548.50" r="1.05" fill="#fff"/><circle cx="3" cy="557.20" r="1.05" fill="#fff"/><circle cx="3" cy="565.90" r="1.05" fill="#fff"/><circle cx="3" cy="574.60" r="1.05" fill="#fff"/><circle cx="3" cy="583.20" r="1.05" fill="#fff"/><circle cx="3" cy="591.90" r="1.05" fill="#fff"/><circle cx="3" cy="600.40" r="1.05" fill="#fff"/></svg>
<span class="t" style="left:947.57px;top:305.14px;font-size:8.58px;line-height:8.58px;color:#f2f2f2;-webkit-text-stroke:0.1px #f2f2f2;transform:scaleX(0.9590);">10</span>
<span class="t" style="left:947.85px;top:339.04px;font-size:8.58px;line-height:8.58px;color:#f2f2f2;-webkit-text-stroke:0.1px #f2f2f2;transform:scaleX(1.0329);">5</span>
<span class="t" style="left:947.85px;top:406.94px;font-size:8.58px;line-height:8.58px;color:#f2f2f2;-webkit-text-stroke:0.1px #f2f2f2;transform:scaleX(1.0329);">5</span>
<span class="t" style="left:947.57px;top:441.14px;font-size:8.58px;line-height:8.58px;color:#f2f2f2;-webkit-text-stroke:0.1px #f2f2f2;transform:scaleX(0.9590);">10</span>
<span class="t" style="left:947.80px;top:475.54px;font-size:8.58px;line-height:8.58px;color:#f2f2f2;-webkit-text-stroke:0.1px #f2f2f2;transform:scaleX(0.9347);">20</span>
<span class="t" style="left:947.90px;top:509.94px;font-size:8.58px;line-height:8.58px;color:#f2f2f2;-webkit-text-stroke:0.1px #f2f2f2;transform:scaleX(0.9237);">30</span>
<span class="t" style="left:948.02px;top:544.04px;font-size:8.58px;line-height:8.58px;color:#f2f2f2;-webkit-text-stroke:0.1px #f2f2f2;transform:scaleX(0.9104);">40</span>
<span class="t" style="left:947.88px;top:561.44px;font-size:8.58px;line-height:8.58px;color:#f2f2f2;-webkit-text-stroke:0.1px #f2f2f2;transform:scaleX(0.9254);">50</span>
<span class="t" style="left:947.79px;top:578.74px;font-size:8.58px;line-height:8.58px;color:#f2f2f2;-webkit-text-stroke:0.1px #f2f2f2;transform:scaleX(0.9351);">60</span>
<span class="t" style="left:947.65px;top:596.71px;font-size:8.14px;line-height:8.14px;color:#e8e8e8;transform:scaleX(1.0174);">∞</span>
<div style="left:944.30px;top:374.6px;width:6px;height:6.4px;border:1px solid #cfcfcf;border-radius:4px"></div>
<span class="t" style="left:952.72px;top:376.38px;font-size:7.70px;line-height:7.70px;color:#e8e8e8;-webkit-text-stroke:0.2px #e8e8e8;transform:scaleX(1.1429);">U</span>
<span class="t" style="left:879.72px;top:329.63px;font-size:9.88px;line-height:9.88px;color:#a8a8a8;transform:scaleX(1.0030);">1</span>
<span class="t" style="left:879.85px;top:344.73px;font-size:9.88px;line-height:9.88px;color:#a8a8a8;transform:scaleX(1.0030);">2</span>
<span class="t" style="left:879.88px;top:359.83px;font-size:9.88px;line-height:9.88px;color:#a8a8a8;transform:scaleX(1.0030);">3</span>
<span class="t" style="left:879.88px;top:374.93px;font-size:9.88px;line-height:9.88px;color:#a8a8a8;transform:scaleX(1.0030);">4</span>
<span class="t" style="left:879.86px;top:390.03px;font-size:9.88px;line-height:9.88px;color:#a8a8a8;transform:scaleX(1.0030);">5</span>
<span class="t" style="left:879.82px;top:405.13px;font-size:9.88px;line-height:9.88px;color:#a8a8a8;transform:scaleX(1.0030);">6</span>
<span class="t" style="left:879.72px;top:435.13px;font-size:9.88px;line-height:9.88px;color:#a8a8a8;transform:scaleX(1.0030);">1</span>
<span class="t" style="left:879.85px;top:450.23px;font-size:9.88px;line-height:9.88px;color:#a8a8a8;transform:scaleX(1.0030);">2</span>
<span class="t" style="left:879.88px;top:465.33px;font-size:9.88px;line-height:9.88px;color:#a8a8a8;transform:scaleX(1.0030);">3</span>
<span class="t" style="left:879.88px;top:480.43px;font-size:9.88px;line-height:9.88px;color:#a8a8a8;transform:scaleX(1.0030);">4</span>
<span class="t" style="left:879.86px;top:495.53px;font-size:9.88px;line-height:9.88px;color:#a8a8a8;transform:scaleX(1.0030);">5</span>
<span class="t" style="left:879.82px;top:510.63px;font-size:9.88px;line-height:9.88px;color:#a8a8a8;transform:scaleX(1.0030);">6</span>
<div style="left:907px;top:418px;width:40px;height:25.6px;background:linear-gradient(#f2f4f0,#e6e8e4 60%,#e2e4e0);border-radius:2px 2px 7px 7px;"></div>
<div style="left:907px;top:445.6px;width:40px;height:25.6px;background:linear-gradient(#e9ebe7,#e3e5e1 72%,#b9bbb7 90%,#a9aba7);border-radius:7px 7px 1px 1px;"></div>
<div style="left:914.6px;top:431.6px;width:25px;height:1.4px;background:#cdd0ca;"></div>
<div style="left:914.6px;top:437.3px;width:25px;height:1.4px;background:#cdd0ca;"></div>
<div style="left:914.6px;top:453.1px;width:25px;height:1.4px;background:#cdd0ca;"></div>
<div style="left:914.6px;top:458.7px;width:25px;height:1.4px;background:#cdd0ca;"></div>
<div style="left:864px;top:637px;width:108px;height:108.4px;background:#2d2d2d;"></div>
<div style="left:864px;top:745.4px;width:108px;height:23px;background:#fff;"></div>
<span class="t" style="left:865.97px;top:680.75px;font-size:9.16px;line-height:9.16px;color:#adadad;transform:scaleX(1.1016);">LR</span>
<span class="t" style="left:895.02px;top:709.63px;font-size:17.44px;line-height:17.44px;color:#8b8b8b;-webkit-text-stroke:0.4px #8b8b8b;transform:scaleX(1.2059);">Main</span>
<div style="left:972px;top:61px;width:52px;height:707px;background:#000;"></div>
<span class="t" style="left:977.30px;top:74.96px;font-size:14.10px;line-height:14.10px;color:#fff;-webkit-text-stroke:0.45px #fff;transform:scaleX(1.0371);">MUTE</span>
<div style="left:972px;top:92.6px;width:52px;height:144.6px;background:#2d2d2d;"></div>
<span class="t" style="left:993.10px;top:97.36px;font-size:15.41px;line-height:15.41px;color:#555;-webkit-text-stroke:0.2px #555;transform:scaleX(1.0030);">1</span>
<span class="t" style="left:993.32px;top:121.26px;font-size:15.41px;line-height:15.41px;color:#555;-webkit-text-stroke:0.2px #555;transform:scaleX(1.0030);">2</span>
<span class="t" style="left:993.36px;top:145.16px;font-size:15.41px;line-height:15.41px;color:#555;-webkit-text-stroke:0.2px #555;transform:scaleX(1.0030);">3</span>
<span class="t" style="left:993.36px;top:169.06px;font-size:15.41px;line-height:15.41px;color:#555;-webkit-text-stroke:0.2px #555;transform:scaleX(1.0030);">4</span>
<span class="t" style="left:993.33px;top:192.96px;font-size:15.41px;line-height:15.41px;color:#555;-webkit-text-stroke:0.2px #555;transform:scaleX(1.0030);">5</span>
<span class="t" style="left:993.26px;top:216.86px;font-size:15.41px;line-height:15.41px;color:#555;-webkit-text-stroke:0.2px #555;transform:scaleX(1.0030);">6</span>
<span class="t" style="left:984.36px;top:246.76px;font-size:14.10px;line-height:14.10px;color:#fff;-webkit-text-stroke:0.45px #fff;transform:scaleX(1.0756);">MIX</span>
<div style="left:972px;top:265px;width:52px;height:286px;background:#fff;"></div>
<span class="t" style="left:975.64px;top:271.19px;font-size:8.87px;line-height:8.87px;color:#111;-webkit-text-stroke:0.2px #111;transform:scaleX(1.0396);">LR</span>
<span class="t" style="left:975.30px;top:306.63px;font-size:17.44px;line-height:17.44px;color:#0a0a0a;-webkit-text-stroke:0.45px #0a0a0a;transform:scaleX(1.1860);">Main</span>
<div style="left:974px;top:349.2px;width:48px;height:199.2px;background:#2d2d2d;overflow:hidden;"></div>
<div style="left:974px;top:349.2px;width:48px;height:199.2px;overflow:hidden">
<span class="t" style="left:14.56px;top:6.49px;font-size:15.84px;line-height:15.84px;color:#8fdc2a;-webkit-text-stroke:0.4px #8fdc2a;transform:scaleX(1.1624);">All</span>
<span class="t" style="left:6.17px;top:30.49px;font-size:15.84px;line-height:15.84px;color:#757575;-webkit-text-stroke:0.4px #757575;transform:scaleX(1.1287);">Auto</span>
<span class="t" style="left:-16.07px;top:54.49px;font-size:15.84px;line-height:15.84px;color:#757575;-webkit-text-stroke:0.4px #757575;transform:scaleX(1.1298);">Full Band</span>
<span class="t" style="left:17.92px;top:78.49px;font-size:15.84px;line-height:15.84px;color:#757575;-webkit-text-stroke:0.4px #757575;transform:scaleX(1.1384);">B</span>
<span class="t" style="left:18.05px;top:102.49px;font-size:15.84px;line-height:15.84px;color:#757575;-webkit-text-stroke:0.4px #757575;transform:scaleX(1.0564);">C</span>
<span class="t" style="left:17.43px;top:126.49px;font-size:15.84px;line-height:15.84px;color:#757575;-webkit-text-stroke:0.4px #757575;transform:scaleX(1.1296);">D</span>
<span class="t" style="left:18.34px;top:150.49px;font-size:15.84px;line-height:15.84px;color:#757575;-webkit-text-stroke:0.4px #757575;transform:scaleX(1.0480);">E</span>
<span class="t" style="left:18.46px;top:174.49px;font-size:15.84px;line-height:15.84px;color:#757575;-webkit-text-stroke:0.4px #757575;transform:scaleX(1.1105);">F</span>
</div>
<div style="left:974px;top:553px;width:48px;height:128px;background:#191919;"></div>
<span class="t" style="left:987.39px;top:560.09px;font-size:15.84px;line-height:15.84px;color:#4a4a4a;-webkit-text-stroke:0.3px #4a4a4a;transform:scaleX(1.0099);">LR</span>
<span class="t" style="left:980.07px;top:584.09px;font-size:15.84px;line-height:15.84px;color:#4a4a4a;-webkit-text-stroke:0.3px #4a4a4a;transform:scaleX(1.1051);">AUX</span>
<span class="t" style="left:986.16px;top:608.09px;font-size:15.84px;line-height:15.84px;color:#4a4a4a;-webkit-text-stroke:0.3px #4a4a4a;transform:scaleX(1.1067);">FX</span>
<span class="t" style="left:980.11px;top:632.09px;font-size:15.84px;line-height:15.84px;color:#4a4a4a;-webkit-text-stroke:0.3px #4a4a4a;transform:scaleX(1.0960);">SUB</span>
<span class="t" style="left:980.32px;top:656.09px;font-size:15.84px;line-height:15.84px;color:#4a4a4a;-webkit-text-stroke:0.3px #4a4a4a;transform:scaleX(1.0777);">VCA</span>
<span class="t" style="left:977.44px;top:684.24px;font-size:8.58px;line-height:8.58px;color:#fff;font-weight:bold;transform:scaleX(0.9702);">MASTERS</span>
</body></html>
